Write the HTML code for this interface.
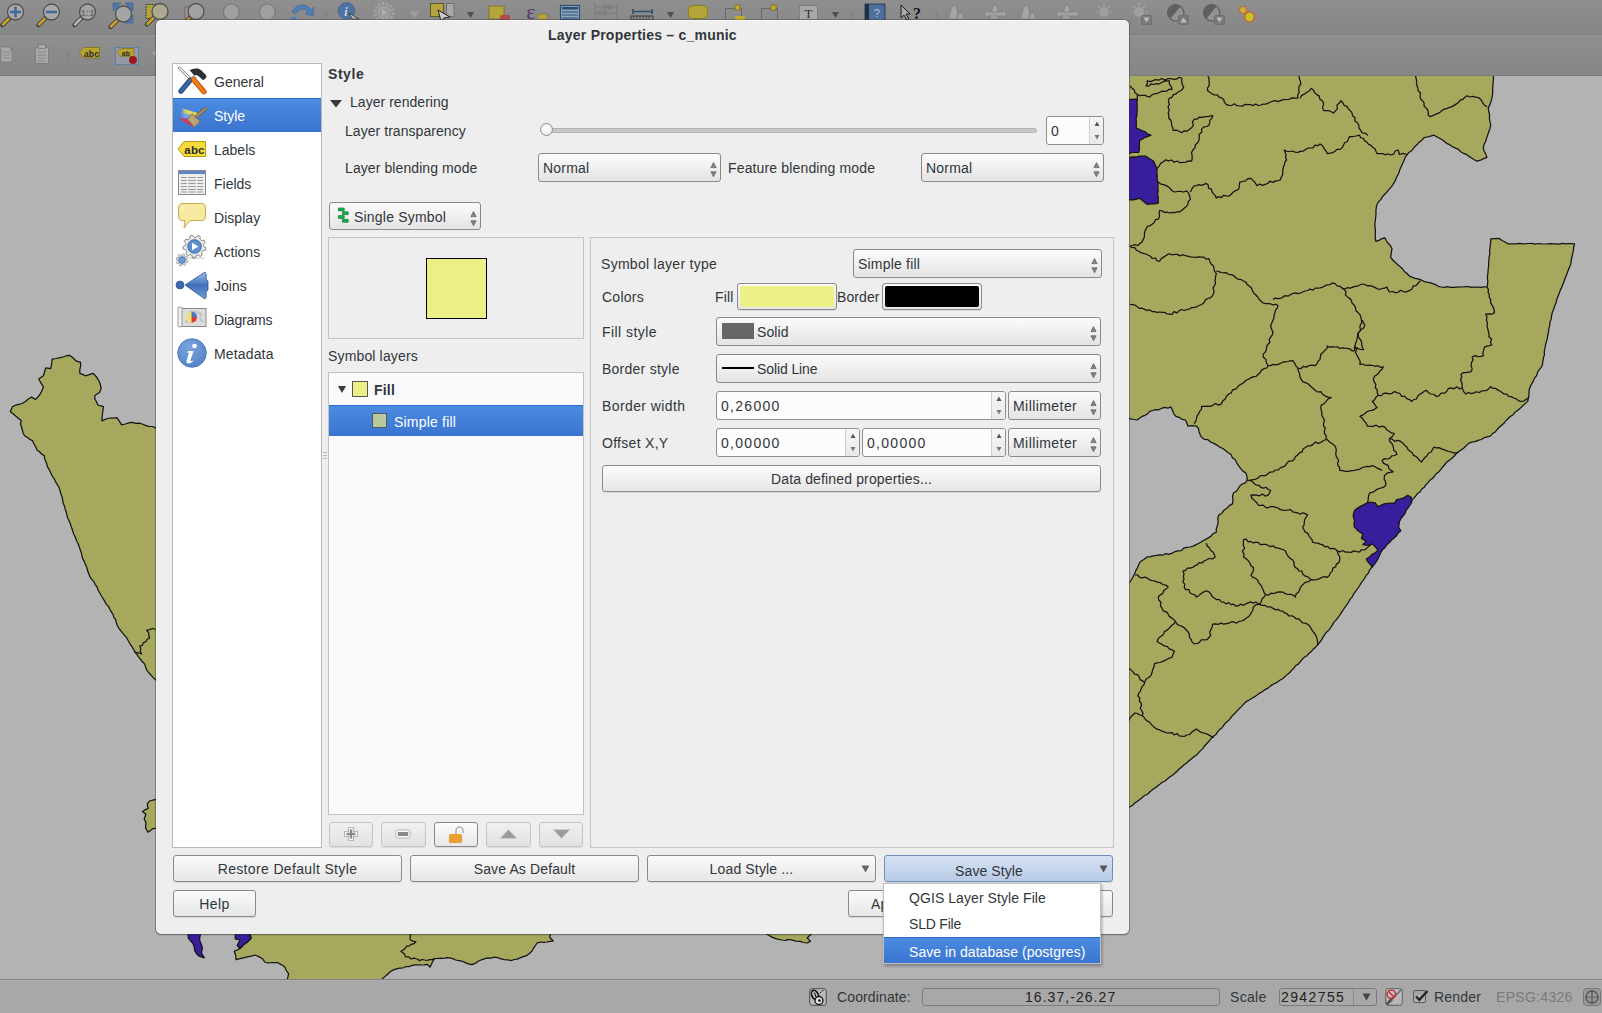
<!DOCTYPE html>
<html><head><meta charset="utf-8">
<style>
*{margin:0;padding:0;box-sizing:border-box}
html,body{width:1602px;height:1013px;overflow:hidden;background:#b3b3b3;font-family:"Liberation Sans",sans-serif;font-size:14px;color:#31363b;letter-spacing:0.15px}
.a{position:absolute}
.t{position:absolute;white-space:nowrap;line-height:16px}
#tb1{left:0;top:0;width:1602px;height:35px;background:linear-gradient(#8f8f8f,#868686);border-bottom:1px solid #7d7d7d}
#tb2{left:0;top:35px;width:1602px;height:41px;background:linear-gradient(#8f8f8f,#868686);border-top:1px solid #979797;border-bottom:1px solid #7b7b7b}
#map{left:0;top:76px;width:1602px;height:903px;background:#b3b3b3;overflow:hidden}
#sb{left:0;top:979px;width:1602px;height:34px;background:#a8a8a8;border-top:1px solid #828282;box-shadow:inset 0 1px 0 #afafaf}
#dlg{left:156px;top:20px;width:973px;height:914px;background:#eeeeee;border-radius:5px;box-shadow:0 0 0 1px rgba(60,60,60,.35),0 1px 2px rgba(0,0,0,.3);border-top:1px solid #f8f8f8}
.btn{position:absolute;border:1px solid #8a8a8a;padding-top:1px;border-radius:3px;background:linear-gradient(#fbfbfb,#e6e6e6);text-align:center;line-height:24px;box-shadow:0 1px 0 rgba(0,0,0,.08)}
.cmb{position:absolute;border:1px solid #8a8a8a;border-radius:3px;background:linear-gradient(#fbfbfb,#e4e4e4);line-height:26px;padding-left:5px}
.spin{position:absolute;border:1px solid #8f8f8f;border-radius:3px;background:#fcfcfc;line-height:26px;padding-left:5px}
.arr{position:absolute;right:6px;top:7px;width:7px;height:14px}
.frame{position:absolute;border:1px solid #c4c4c4}

.ud{position:absolute;width:7px;height:18px}
.sel{background:linear-gradient(#4b8ce0,#3a74d0);color:#fff;border-top:1px solid #2f6bcc}
.mi{position:absolute;left:883px;width:218px;height:27px}
</style></head><body>
<div id="tb1" class="a"></div>
<div id="tb2" class="a"></div>
<svg class="a" style="left:0;top:0" width="1602" height="76" viewBox="0 0 1602 76"><line x1="9.5" y1="18" x2="2.5" y2="25" stroke="#3a3a3a" stroke-width="4.4" stroke-linecap="round"/><line x1="8.5" y1="19" x2="3.0" y2="24.5" stroke="#c9a227" stroke-width="2.6" stroke-linecap="round"/><circle cx="15.5" cy="12" r="8" fill="#a9a9a9" stroke="#505050" stroke-width="1.3"/><path d="M15.5 6.5V17.5M10 12H21" stroke="#3f6a9c" stroke-width="2.6"/><line x1="45.5" y1="18" x2="38.5" y2="25" stroke="#3a3a3a" stroke-width="4.4" stroke-linecap="round"/><line x1="44.5" y1="19" x2="39.0" y2="24.5" stroke="#c9a227" stroke-width="2.6" stroke-linecap="round"/><circle cx="51.5" cy="12" r="8" fill="#a9a9a9" stroke="#505050" stroke-width="1.3"/><path d="M46 12H57" stroke="#3f6a9c" stroke-width="2.6"/><line x1="81.5" y1="18" x2="74.5" y2="25" stroke="#3a3a3a" stroke-width="4.4" stroke-linecap="round"/><line x1="80.5" y1="19" x2="75.0" y2="24.5" stroke="#b5b5b5" stroke-width="2.6" stroke-linecap="round"/><circle cx="87.5" cy="12" r="8" fill="#a3a3a3" stroke="#505050" stroke-width="1.3"/><text x="87.5" y="15.5" font-family="Liberation Sans" font-weight="bold" font-size="9.5" text-anchor="middle" fill="#6f6f6f">1:1</text><path d="M113 3h8l-3 3 3 3-3 3-3-3-2 2z M133 3h-8l3 3-3 3 3 3 3-3 2 2z M133 23h-8l3-3-3-3 3-3 3 3 2-2z" fill="#4f78a8" stroke="#3a5f8a" stroke-width="0.6"/><line x1="117.5" y1="20" x2="110.5" y2="27" stroke="#3a3a3a" stroke-width="4.4" stroke-linecap="round"/><line x1="116.5" y1="21" x2="111.0" y2="26.5" stroke="#c9a227" stroke-width="2.6" stroke-linecap="round"/><circle cx="123.5" cy="14" r="8" fill="#a5a5a5" stroke="#505050" stroke-width="1.3"/><rect x="146" y="4.5" width="10" height="14" fill="#b4a33a" stroke="#2a2a2a" stroke-width="1" stroke-dasharray="1.6 1.2"/><line x1="154" y1="17.5" x2="147" y2="24.5" stroke="#3a3a3a" stroke-width="4.4" stroke-linecap="round"/><line x1="153" y1="18.5" x2="147.5" y2="24.0" stroke="#c9a227" stroke-width="2.6" stroke-linecap="round"/><circle cx="160" cy="11.5" r="8" fill="#aba98f" stroke="#505050" stroke-width="1.3"/><rect x="185" y="7" width="4" height="12" fill="#a58fa6" stroke="#555" stroke-width="0.6"/><line x1="190" y1="17.5" x2="183" y2="24.5" stroke="#3a3a3a" stroke-width="4.4" stroke-linecap="round"/><line x1="189" y1="18.5" x2="183.5" y2="24.0" stroke="#c9a227" stroke-width="2.6" stroke-linecap="round"/><circle cx="196" cy="11.5" r="8" fill="#a2a2a2" stroke="#505050" stroke-width="1.3"/><circle cx="231.4" cy="12" r="8" fill="#9f9f9f" stroke="#7a7a7a" stroke-width="1.2"/><circle cx="267.4" cy="12" r="8" fill="#9f9f9f" stroke="#7a7a7a" stroke-width="1.2"/><path d="M292 12 Q296 4 304 5 Q309 6 311 10 L314 7 L313 16 L305 14 L308 12 Q306 9 302 9 Q297 10 296 14Z" fill="#4f7fb4" stroke="#3b6596" stroke-width="0.6"/><path d="M291 17 h6 l-1 3 h-5z" fill="#4f7fb4"/><path d="M324.5 12h3M324.5 15h3M324.5 18h3" stroke="#7a7a7a" stroke-width="1"/><circle cx="346.5" cy="11" r="8.3" fill="#4d74a2" stroke="#3d5f88" stroke-width="0.8"/><text x="346" y="16" font-family="Liberation Serif" font-style="italic" font-weight="bold" font-size="12" text-anchor="middle" fill="#cfd8e2">i</text><path d="M349 13 L359 19 L352 19Z" fill="#b9b9b9" stroke="#222" stroke-width="0.7"/><circle cx="384" cy="12.5" r="9" fill="none" stroke="#a3a3a3" stroke-width="3" stroke-dasharray="2.4 1.6"/><circle cx="384" cy="12.5" r="6" fill="#9a9a9a" stroke="#a6a6a6" stroke-width="1.2"/><path d="M382 9L387 12.5L382 16Z" fill="#b0b0b0"/><path d="M411 12h7l-3.5 6z" fill="#9c9c9c" stroke="#a7a7a7" stroke-width="0.6"/><rect x="430.5" y="3.5" width="13" height="13" fill="#b3a43c" stroke="#4f4a1a" stroke-width="0.8"/><rect x="446.5" y="3.5" width="7.5" height="13" fill="#a7a7a7" stroke="#666" stroke-width="0.8"/><path d="M438 10L450 17L444 18L441 21Z" fill="#c9c9c9" stroke="#111" stroke-width="0.9"/><path d="M467 12h7l-3.5 6z" fill="#4f4f4f"/><rect x="489" y="6" width="15" height="13" fill="#b3a43c" stroke="#5a5018" stroke-width="0.8" stroke-dasharray="1.5 1"/><rect x="500" y="15" width="10" height="6" rx="2" fill="#b24a4a"/><text x="531" y="19" font-family="Liberation Serif" font-size="22" text-anchor="middle" fill="#5a2f6e">ε</text><rect x="538" y="14" width="9" height="6" fill="#b3a43c" stroke="#5a5018" stroke-width="0.6" stroke-dasharray="1.2 0.8"/><rect x="560.5" y="5.5" width="19" height="14" fill="#8fa6c0" stroke="#2d4d70" stroke-width="1.2"/><path d="M562 9h16M562 12h16M562 15h16M562 18h16" stroke="#2d4d70" stroke-width="1"/><rect x="562" y="7" width="16" height="2" fill="#2d4d70"/><path d="M595 3V20M617 3V20M595 7H617M595 13H617" stroke="#7b7b7b" stroke-width="1"/><circle cx="605" cy="7" r="2" fill="none" stroke="#7b7b7b"/><circle cx="610" cy="7" r="2" fill="none" stroke="#7b7b7b"/><circle cx="600" cy="13" r="2" fill="none" stroke="#7b7b7b"/><circle cx="605" cy="13" r="2" fill="none" stroke="#7b7b7b"/><path d="M633 9V14M652 9V14M633 11.5H652" stroke="#2d4d70" stroke-width="1.6"/><rect x="631" y="16" width="22" height="4" fill="none" stroke="#3d3d3d" stroke-width="1"/><path d="M634 16v3M637 16v3M640 16v3M643 16v3M646 16v3M649 16v3" stroke="#3d3d3d" stroke-width="0.8"/><path d="M667 12h7l-3.5 6z" fill="#4f4f4f"/><rect x="688.5" y="5.5" width="19" height="13" rx="4" fill="#b3a43c" stroke="#8c7c20" stroke-width="1"/><rect x="725.5" y="8.5" width="16" height="12" fill="none" stroke="#333" stroke-width="0.8" stroke-dasharray="1 1"/><path d="M735 5h5v5h-5z" fill="#c4ac2a" stroke="#6a5a10" stroke-width="0.6"/><rect x="735" y="16" width="10" height="5" rx="2" fill="#c4ac2a"/><rect x="761.5" y="8.5" width="16" height="12" fill="none" stroke="#333" stroke-width="0.8" stroke-dasharray="1 1"/><path d="M771 5h5v5h-5z" fill="#c4ac2a" stroke="#6a5a10" stroke-width="0.6"/><rect x="799.5" y="5.5" width="18" height="14" fill="#a8a8a8" stroke="#7a7a7a" stroke-width="0.8"/><text x="808.5" y="18" font-family="Liberation Serif" font-size="13" text-anchor="middle" fill="#2e2e2e">T</text><path d="M832 12h7l-3.5 6z" fill="#4f4f4f"/><path d="M850.5 12h3M850.5 15h3M850.5 18h3" stroke="#7a7a7a" stroke-width="1"/><rect x="865" y="4" width="20" height="17" fill="#4d6f9a" stroke="#1f2f44" stroke-width="0.8"/><rect x="865" y="4" width="4" height="17" fill="#1f2f44"/><text x="877" y="17" font-family="Liberation Sans" font-size="11" text-anchor="middle" fill="#b8c8dc">?</text><path d="M901 5L901 18L904 15L907 20L909 19L906 14L910 14Z" fill="#a9a9a9" stroke="#111" stroke-width="0.9"/><text x="917" y="19" font-family="Liberation Serif" font-weight="bold" font-size="16" text-anchor="middle" fill="#111">?</text><path d="M935.5 12h3M935.5 15h3M935.5 18h3" stroke="#7a7a7a" stroke-width="1"/><path d="M949 19 Q951 4 955 5 Q958 8 957 19 Z M957 19 Q960 8 963 16 V19Z" fill="#a5a5a5" stroke="#7d7d7d" stroke-width="0.7"/><path d="M1021 19 Q1023 4 1027 5 Q1030 8 1029 19 Z M1029 19 Q1032 8 1035 16 V19Z" fill="#a5a5a5" stroke="#7d7d7d" stroke-width="0.7"/><path d="M990 19 Q992 4 996 5 Q999 8 998 19 Z" fill="#a5a5a5" stroke="#7d7d7d" stroke-width="0.7"/><path d="M984 14 L988 10 V12 H1003 V10 L1007 14 L1003 18 V16 H988 V18 Z" fill="#a2a2a2" stroke="#7d7d7d" stroke-width="0.7"/><path d="M1062 19 Q1064 4 1068 5 Q1071 8 1070 19 Z" fill="#a5a5a5" stroke="#7d7d7d" stroke-width="0.7"/><path d="M1056 14 L1060 10 V12 H1075 V10 L1079 14 L1075 18 V16 H1060 V18 Z" fill="#a2a2a2" stroke="#7d7d7d" stroke-width="0.7"/><circle cx="1104" cy="12" r="5" fill="#9f9f9f"/><path d="M1104 3v3M1095 12h3M1113 12h-3M1098 6l2 2M1110 6l-2 2" stroke="#a5a5a5" stroke-width="1.2"/><rect x="1106" y="16" width="9" height="7" rx="1" fill="#8a8a8a"/><circle cx="1139" cy="12" r="5" fill="#9f9f9f"/><path d="M1139 3v3M1130 12h3M1148 12h-3M1133 6l2 2M1145 6l-2 2" stroke="#a5a5a5" stroke-width="1.2"/><rect x="1141.5" y="15.5" width="10" height="9" rx="1.5" fill="#7a7a7a" stroke="#6f6f6f"/><path d="M1143.5 17.5h6l-3 5z" fill="#bdbdbd"/><circle cx="1176" cy="13" r="8" fill="#929292" stroke="#5a5a5a" stroke-width="1.2"/><path d="M1170 19 L1181 6 A8 8 0 0 0 1170 19Z" fill="#5f5f5f"/><rect x="1178.5" y="15.5" width="10" height="9" rx="1.5" fill="#7a7a7a" stroke="#6f6f6f"/><path d="M1180.5 22.5h6l-3 -5z" fill="#bdbdbd"/><circle cx="1212" cy="13" r="8" fill="#929292" stroke="#5a5a5a" stroke-width="1.2"/><path d="M1206 19 L1217 6 A8 8 0 0 0 1206 19Z" fill="#5f5f5f"/><rect x="1214.5" y="15.5" width="10" height="9" rx="1.5" fill="#7a7a7a" stroke="#6f6f6f"/><path d="M1216.5 17.5h6l-3 5z" fill="#bdbdbd"/><circle cx="1243" cy="10" r="3.5" fill="#c9b436" stroke="#c06a3a" stroke-width="1.2"/><circle cx="1249.5" cy="17" r="5" fill="#c9c02a" stroke="#c06a3a" stroke-width="1.6"/><path d="M1 47h8l3 3v12H1z" fill="#a9a9a9" stroke="#7c7c7c" stroke-width="0.8"/><path d="M3 52h7M3 55h7M3 58h7" stroke="#7f7f7f" stroke-width="0.8"/><path d="M9 50h3v-3" fill="none" stroke="#7c7c7c" stroke-width="0.8"/><rect x="35.5" y="47.5" width="13" height="16" fill="#a9a9a9" stroke="#7c7c7c" stroke-width="0.9"/><rect x="38.5" y="44.5" width="7" height="4" fill="#a9a9a9" stroke="#7c7c7c" stroke-width="0.8"/><path d="M38 52h8M38 55h8M38 58h8M38 61h8" stroke="#7f7f7f" stroke-width="0.8"/><path d="M66.5 52h3M66.5 55h3M66.5 58h3" stroke="#7a7a7a" stroke-width="1"/><path d="M79 52.5L84 47.5H99.5V58H84Z" fill="#b9a42e" stroke="#80701a" stroke-width="0.8"/><text x="91.5" y="56.5" font-family="Liberation Sans" font-weight="bold" font-size="8.5" text-anchor="middle" fill="#2a2a2a">abc</text><rect x="115.5" y="47.5" width="23" height="17" fill="#939aa5" stroke="#5d7fa8" stroke-width="1"/><path d="M117 52.5L121 48.5H134V56.5H121Z" fill="#b9a42e" stroke="#80701a" stroke-width="0.7"/><text x="126" y="55.5" font-family="Liberation Sans" font-weight="bold" font-size="7" text-anchor="middle" fill="#2a2a2a">ab</text><circle cx="133" cy="60" r="4" fill="#9b1a1a"/><path d="M156 49.5v7l-4-3.5z" fill="#a3a3a3"/></svg>
<div id="map" class="a"></div>
<svg class="a" style="left:0;top:76px" width="1602" height="903" viewBox="0 0 1602 903">
<polygon points="1120.0,-6.0 1123.0,-6.2 1126.0,-6.3 1129.0,-5.9 1132.0,-6.4 1135.1,-6.0 1138.1,-6.1 1141.1,-6.4 1144.1,-6.0 1147.1,-6.4 1150.1,-6.1 1153.1,-6.4 1156.1,-6.4 1159.2,-6.1 1162.2,-5.7 1165.2,-6.3 1168.2,-6.2 1171.2,-5.9 1174.2,-5.6 1177.2,-5.9 1180.2,-6.1 1183.3,-5.6 1186.3,-6.4 1189.3,-5.7 1192.3,-6.2 1195.3,-6.3 1198.3,-6.3 1201.3,-6.2 1204.3,-5.7 1207.4,-6.3 1210.4,-5.9 1213.4,-5.9 1216.4,-6.1 1219.4,-6.0 1222.4,-6.4 1225.4,-6.4 1228.4,-6.3 1231.4,-5.8 1234.5,-6.1 1237.5,-6.2 1240.5,-5.9 1243.5,-6.0 1246.5,-6.2 1249.5,-5.7 1252.5,-5.8 1255.5,-6.2 1258.6,-5.9 1261.6,-6.0 1264.6,-5.7 1267.6,-5.8 1270.6,-6.2 1273.6,-5.6 1276.6,-6.3 1279.6,-6.1 1282.7,-5.8 1285.7,-6.3 1288.7,-6.0 1291.7,-6.4 1294.7,-5.8 1297.7,-5.8 1300.7,-5.9 1303.7,-5.7 1306.8,-6.2 1309.8,-5.8 1312.8,-5.9 1315.8,-5.9 1318.8,-6.0 1321.8,-5.7 1324.8,-5.6 1327.8,-6.0 1330.8,-5.9 1333.9,-6.4 1336.9,-5.8 1339.9,-5.9 1342.9,-5.6 1345.9,-5.7 1348.9,-6.2 1351.9,-6.1 1354.9,-5.8 1358.0,-6.4 1361.0,-6.0 1364.0,-6.3 1367.0,-6.3 1370.0,-6.4 1373.0,-5.8 1376.0,-6.3 1379.0,-6.2 1382.1,-6.1 1385.1,-5.7 1388.1,-6.4 1391.1,-6.0 1394.1,-6.0 1397.1,-5.7 1400.1,-5.7 1403.1,-5.7 1406.1,-6.2 1409.2,-6.1 1412.2,-6.1 1415.2,-5.7 1418.2,-5.6 1421.2,-6.3 1424.2,-6.3 1427.2,-6.2 1430.2,-6.2 1433.3,-6.0 1436.3,-5.9 1439.3,-6.2 1442.3,-6.4 1445.3,-6.1 1448.3,-6.1 1451.3,-5.9 1454.3,-5.6 1457.4,-5.8 1460.4,-6.0 1463.4,-5.9 1466.4,-5.8 1469.4,-6.4 1472.4,-5.6 1475.4,-5.7 1478.4,-5.7 1481.5,-5.7 1484.5,-6.1 1487.5,-6.1 1490.5,-6.4 1493.5,-6.0 1493.2,-2.9 1493.5,0.3 1493.4,3.4 1493.1,6.5 1492.9,9.7 1492.6,12.8 1492.7,16.0 1492.5,19.1 1491.9,22.2 1491.0,25.6 1489.8,28.9 1488.2,32.1 1488.8,35.5 1489.6,39.0 1489.4,42.5 1490.1,46.0 1490.7,49.4 1489.9,52.7 1488.8,55.8 1487.7,59.0 1486.6,62.1 1485.7,65.4 1484.1,68.3 1483.3,71.6 1484.1,75.0 1485.8,78.1 1487.0,81.4 1483.7,82.6 1480.5,84.2 1477.1,85.1 1474.2,83.8 1471.6,82.0 1468.9,80.4 1466.5,78.4 1463.4,77.3 1460.7,75.8 1458.4,73.4 1455.5,72.1 1452.6,70.8 1450.1,68.9 1447.2,67.7 1444.7,65.7 1442.2,63.7 1439.5,62.2 1436.7,60.7 1433.9,59.2 1430.7,60.2 1427.3,61.0 1424.0,61.7 1422.1,64.1 1419.5,65.9 1417.5,68.2 1415.2,70.2 1413.4,72.6 1411.3,74.9 1408.8,76.6 1406.8,79.0 1405.0,81.8 1403.8,84.9 1402.4,87.9 1401.0,90.9 1399.7,94.0 1398.8,97.2 1397.1,100.1 1395.9,103.1 1394.4,106.1 1392.8,108.8 1390.9,111.3 1388.8,113.6 1386.9,116.1 1384.7,118.3 1382.5,120.6 1381.0,123.4 1378.7,125.6 1377.1,128.3 1376.3,131.5 1375.9,134.9 1376.0,138.2 1375.7,141.5 1375.3,144.8 1374.7,148.1 1375.2,151.5 1375.4,155.0 1375.3,158.5 1375.3,162.0 1375.9,165.4 1378.9,164.4 1381.7,162.8 1384.6,161.6 1386.3,164.5 1388.1,167.3 1390.5,169.8 1392.0,172.8 1391.2,177.1 1390.7,181.4 1392.8,184.0 1395.1,186.2 1397.5,188.5 1400.0,190.6 1402.5,192.8 1404.4,195.5 1407.0,197.5 1409.2,199.9 1412.0,201.2 1414.9,202.3 1418.0,202.8 1420.9,203.9 1423.7,205.3 1426.6,206.1 1429.7,206.7 1432.7,207.7 1435.6,208.7 1438.3,210.3 1441.3,211.0 1444.3,211.3 1447.4,210.7 1450.4,211.3 1453.5,211.4 1456.5,211.1 1459.6,210.9 1462.6,211.0 1465.7,210.7 1468.7,210.6 1471.8,211.4 1474.8,211.1 1477.9,211.0 1480.9,211.4 1484.0,210.9 1487.0,211.0 1487.6,208.0 1487.8,205.0 1487.4,202.0 1487.7,199.0 1488.0,196.0 1488.2,192.9 1488.7,190.0 1488.6,186.9 1489.0,183.9 1489.0,180.9 1489.9,178.0 1489.6,174.9 1490.0,171.9 1490.3,168.9 1490.8,165.9 1490.7,162.9 1495.0,162.6 1499.3,162.4 1502.0,164.5 1505.1,166.0 1508.0,167.8 1511.7,167.8 1515.4,167.8 1519.1,167.4 1522.8,167.8 1525.8,167.7 1528.9,167.5 1531.9,167.4 1535.0,168.1 1538.0,167.5 1541.1,167.8 1544.1,168.0 1547.2,167.9 1550.2,167.6 1553.3,167.8 1556.3,167.8 1559.4,168.1 1562.4,167.4 1565.5,167.9 1568.5,167.6 1571.6,167.6 1574.6,167.8 1573.7,171.1 1573.4,174.4 1572.7,177.7 1571.9,181.0 1571.2,184.2 1570.9,187.6 1569.8,190.6 1568.5,193.5 1567.4,196.6 1566.3,199.6 1565.0,202.5 1564.0,205.6 1562.8,208.5 1561.7,211.5 1560.2,214.4 1559.2,217.5 1557.9,220.4 1556.7,223.4 1556.2,226.6 1554.8,229.5 1553.8,232.8 1552.5,236.0 1551.6,239.3 1551.3,242.8 1550.0,246.0 1549.7,249.4 1548.8,252.7 1548.5,256.2 1547.7,259.5 1547.2,262.9 1546.2,266.2 1545.5,269.3 1544.9,272.5 1544.3,275.7 1544.4,278.9 1543.4,282.0 1542.9,285.2 1542.5,288.4 1541.2,291.3 1539.1,293.8 1537.5,296.5 1536.6,299.6 1534.5,302.1 1533.4,305.1 1531.7,307.8 1530.2,310.6 1529.3,313.5 1528.9,316.5 1529.0,319.5 1528.3,322.5 1527.7,325.4 1525.2,327.6 1522.8,329.8 1520.5,332.1 1517.9,334.2 1515.2,336.1 1513.1,338.7 1510.3,340.5 1507.9,342.7 1505.8,344.9 1503.9,347.3 1501.6,349.3 1499.2,351.3 1497.1,353.5 1495.3,356.0 1492.5,357.5 1490.7,360.0 1487.4,360.8 1484.2,361.7 1481.3,363.5 1478.1,364.4 1475.0,365.7 1471.6,366.1 1468.5,367.4 1466.2,369.7 1463.8,372.0 1461.1,373.9 1458.4,375.8 1455.9,378.0 1453.8,380.5 1451.4,382.8 1448.7,384.7 1446.4,386.6 1444.5,389.0 1442.4,391.2 1440.7,393.7 1438.7,395.9 1436.2,397.8 1434.4,400.1 1432.5,402.5 1429.9,404.2 1428.1,406.6 1425.9,408.7 1424.3,411.3 1421.7,413.0 1420.2,415.7 1417.6,417.4 1415.8,419.8 1413.9,422.1 1411.7,424.2 1409.9,426.6 1407.9,428.9 1406.6,431.7 1404.9,434.2 1402.9,436.5 1401.3,439.1 1399.4,441.4 1398.3,444.2 1396.8,446.8 1395.4,449.5 1393.8,452.1 1392.3,454.6 1390.8,457.3 1389.0,459.7 1387.9,462.5 1386.3,465.1 1385.1,467.9 1383.5,470.4 1382.3,473.2 1380.7,475.7 1379.4,478.5 1377.4,480.8 1376.1,483.5 1374.9,486.3 1373.3,488.8 1371.8,491.4 1369.7,493.8 1368.6,496.9 1366.3,499.2 1364.8,502.0 1363.0,504.6 1361.0,507.1 1359.5,510.0 1357.7,512.5 1355.8,515.1 1353.8,517.6 1352.5,520.6 1350.4,522.9 1348.7,525.7 1347.1,528.4 1345.2,530.9 1343.5,533.5 1341.7,536.1 1340.0,538.8 1338.1,541.3 1336.3,543.9 1334.0,546.1 1332.5,548.9 1330.7,551.5 1328.9,554.1 1326.5,556.2 1324.6,558.7 1322.9,561.4 1321.4,564.1 1319.5,566.7 1317.5,569.1 1315.5,571.3 1313.2,573.3 1311.2,575.6 1308.9,577.5 1306.9,579.7 1304.3,581.3 1302.1,583.4 1300.2,585.8 1298.3,588.1 1295.6,589.7 1293.9,592.2 1291.7,594.2 1289.8,596.6 1287.4,598.4 1285.2,600.4 1283.0,602.5 1279.9,604.3 1276.9,606.4 1273.7,608.0 1270.6,609.9 1268.1,612.1 1265.2,613.6 1262.6,615.5 1259.7,617.1 1257.1,619.1 1254.4,620.9 1251.5,622.5 1248.8,624.3 1245.9,625.9 1243.6,628.2 1241.4,630.6 1239.1,632.8 1236.9,635.2 1234.7,637.5 1232.3,639.8 1230.4,642.4 1228.3,644.8 1225.6,646.8 1223.7,649.4 1221.8,651.9 1219.4,653.8 1217.4,656.1 1215.7,658.8 1213.1,660.6 1210.9,662.8 1209.0,665.3 1206.9,667.5 1204.7,669.7 1203.1,672.4 1200.8,674.4 1198.7,676.7 1196.6,679.0 1193.9,680.8 1191.5,682.8 1189.0,684.8 1186.7,687.0 1184.0,688.8 1181.7,691.0 1179.2,693.0 1177.0,695.3 1174.6,697.5 1172.1,699.4 1169.4,701.2 1167.0,703.2 1164.7,705.2 1161.8,706.5 1159.5,708.6 1157.0,710.4 1154.6,712.2 1152.1,714.0 1149.7,716.0 1147.5,718.2 1144.6,719.5 1142.2,721.4 1139.8,723.4 1137.4,725.2 1134.8,727.0 1132.7,729.3 1130.0,730.8 1126.6,732.3 1123.4,734.5 1120.0,736.0" fill="#a6a85e" stroke="#141414" stroke-width="1.25" stroke-linejoin="round"/>
<polygon points="10.3,335.4 12.6,330.6 15.6,329.2 18.9,328.3 22.1,327.5 25.4,325.5 28.3,323.0 31.6,321.1 35.5,323.5 37.5,321.3 39.6,319.0 41.1,316.4 43.4,310.9 41.8,308.3 40.2,305.7 38.7,303.0 43.4,299.8 44.6,295.8 45.8,291.9 50.6,292.7 51.3,289.6 51.8,286.4 52.1,283.2 56.1,282.5 60.0,281.6 63.2,281.0 66.2,279.7 69.5,279.3 72.9,281.8 75.8,284.8 80.6,286.4 80.6,290.1 79.8,293.7 79.8,297.4 82.6,298.4 85.3,299.8 89.3,298.7 93.2,297.4 96.3,300.7 98.7,304.5 100.3,308.3 101.1,312.4 99.5,316.4 94.8,319.6 94.8,322.7 96.5,325.8 97.9,329.0 103.5,330.6 102.9,334.1 102.5,337.7 102.1,341.2 101.9,344.8 107.4,342.5 110.6,342.0 113.7,342.0 116.9,341.7 119.3,345.2 121.6,348.8 125.3,348.0 128.9,346.9 132.7,346.4 135.8,347.3 139.1,347.2 142.2,348.0 145.4,349.4 148.8,350.3 152.4,350.5 155.6,351.9 158.7,352.6 161.8,353.6 165.0,354.0 164.6,357.0 165.0,360.0 165.2,363.1 165.3,366.1 164.6,369.1 165.3,372.1 164.9,375.2 165.3,378.2 165.0,381.2 164.6,384.2 165.3,387.3 164.7,390.3 165.0,393.3 164.7,396.3 164.8,399.3 165.2,402.4 164.6,405.4 165.0,408.4 165.4,411.4 165.4,414.5 165.0,417.5 165.0,420.5 165.2,423.5 165.3,426.6 165.1,429.6 165.2,432.6 164.7,435.6 165.4,438.7 164.8,441.7 164.7,444.7 165.3,447.7 164.6,450.7 164.8,453.8 164.6,456.8 165.2,459.8 165.1,462.8 165.1,465.9 164.6,468.9 164.9,471.9 165.1,474.9 165.1,478.0 165.2,481.0 165.4,484.0 165.4,487.0 164.7,490.0 165.2,493.1 164.6,496.1 165.2,499.1 165.2,502.1 165.0,505.2 165.3,508.2 165.1,511.2 164.6,514.2 164.7,517.3 164.7,520.3 164.9,523.3 164.6,526.3 164.6,529.3 165.0,532.4 164.8,535.4 165.4,538.4 164.8,541.4 165.0,544.5 164.8,547.5 164.9,550.5 165.2,553.5 165.4,556.6 164.6,559.6 165.3,562.6 165.0,565.6 165.1,568.7 165.2,571.7 164.8,574.7 164.6,577.7 165.2,580.7 164.9,583.8 165.2,586.8 164.9,589.8 165.1,592.8 165.3,595.9 165.3,598.9 165.3,601.9 164.6,604.9 165.0,608.0 165.3,611.0 165.0,614.0 162.9,611.2 160.6,608.5 157.8,606.3 155.5,603.7 153.0,601.4 150.8,598.9 148.6,596.5 146.6,593.8 145.5,590.9 144.6,587.9 142.4,585.8 140.5,583.3 138.6,580.9 136.8,578.3 134.8,576.0 133.5,573.1 131.8,570.4 130.0,567.8 128.4,565.0 126.9,562.2 124.9,559.7 122.9,557.3 120.9,554.9 119.0,552.3 117.4,549.7 116.4,546.9 115.8,543.9 113.9,541.4 113.0,538.5 111.4,535.9 109.8,533.2 108.4,530.4 106.2,528.1 104.7,525.4 103.2,522.7 101.4,520.0 99.8,517.0 98.2,514.2 97.0,511.1 95.2,508.3 93.6,505.4 91.3,502.9 89.7,500.1 88.4,497.0 87.5,494.0 86.6,491.0 85.2,488.1 84.2,485.1 82.6,482.4 81.9,479.3 81.2,476.2 80.1,473.2 79.0,470.3 78.0,467.3 76.4,464.5 75.5,461.5 74.0,458.8 73.0,456.0 72.1,453.0 71.1,450.2 70.2,447.3 68.9,444.5 67.6,441.8 66.9,438.8 66.2,435.8 65.1,432.9 64.4,429.9 63.1,427.1 62.7,424.0 62.0,420.7 60.7,417.6 60.0,414.3 59.0,411.4 57.4,408.7 55.7,406.1 54.5,403.3 52.4,400.3 50.8,397.1 49.3,393.7 47.4,390.6 46.5,386.9 44.9,383.4 44.2,379.6 41.6,378.0 39.5,375.8 37.1,374.0 35.6,370.8 33.9,367.8 32.4,364.6 29.6,363.2 27.2,361.3 24.5,359.8 23.1,357.0 22.3,354.0 21.5,351.0 20.5,348.0 21.3,344.8" fill="#a6a85e" stroke="#141414" stroke-width="1.25" stroke-linejoin="round"/>
<polygon points="154.9,723.7 149.4,725.0 147.3,727.8 148.0,732.7 145.1,733.7 142.5,735.4 145.9,738.2 144.2,743.0 145.9,746.5 145.6,752.0 148.0,756.2 152.8,752.7 155.9,752.4 158.9,752.2 161.9,751.4 165.0,751.0 164.8,747.9 164.8,744.8 165.4,741.7 165.2,738.6 164.8,735.4 164.6,732.3 165.0,729.2 165.2,726.1 165.0,723.0" fill="#a6a85e" stroke="#141414" stroke-width="1.25" stroke-linejoin="round"/>
<polygon points="251.1,862.1 248.9,864.2 246.8,866.4 244.3,868.2 241.9,870.1 239.9,872.4 237.2,874.0 234.3,875.2 235.6,879.3 236.1,883.6 239.8,882.6 243.6,881.8 247.3,880.8 251.2,880.1 254.9,879.0 258.8,880.6 262.4,882.7 265.2,886.5 268.2,886.8 271.2,886.7 274.3,886.5 277.3,886.5 281.2,888.6 284.8,891.1 286.3,894.6 288.6,897.7 287.8,901.5 286.5,905.2 285.8,909.0 288.8,908.8 291.8,908.7 294.8,909.2 297.9,908.8 300.9,909.4 303.9,909.0 306.9,908.7 309.9,908.8 312.9,908.9 315.9,909.1 318.9,909.4 321.9,908.7 325.0,908.9 328.0,908.7 331.0,909.4 334.0,908.7 337.0,908.6 340.0,908.6 343.0,908.9 346.1,909.4 349.1,909.3 352.1,909.2 355.1,909.4 358.1,909.4 361.1,908.8 364.1,908.7 367.1,909.4 370.1,909.2 373.2,908.6 376.2,909.1 379.2,908.9 382.2,909.0 382.1,906.0 382.2,903.0 384.9,900.6 387.6,898.2 390.3,895.8 393.4,893.9 396.5,892.9 399.6,892.2 402.9,892.0 405.9,890.5 409.2,890.5 412.2,889.3 415.2,888.8 418.2,888.8 421.2,889.0 424.2,888.8 427.2,888.3 430.0,891.1 431.5,888.3 432.7,885.3 434.6,882.7 437.6,882.5 440.6,882.2 443.6,882.5 446.6,881.7 449.6,881.8 452.7,882.6 455.6,884.0 458.7,884.6 462.1,885.2 465.3,886.6 468.4,887.9 471.8,888.7 475.2,887.4 478.2,885.3 481.5,883.8 484.9,882.7 488.0,881.8 491.2,882.1 494.3,881.2 497.7,881.7 501.0,882.8 504.4,883.6 507.8,883.8 511.2,884.6 514.1,883.5 517.3,883.1 520.2,881.9 523.1,880.6 526.1,879.9 529.1,877.7 531.8,875.2 533.5,872.3 535.4,869.5 537.4,866.8 540.5,866.0 543.8,866.3 547.0,866.0 550.1,865.4 553.3,864.9 549.6,861.2 550.5,858.0 550.8,854.5 549.8,851.0 549.9,847.5 550.0,844.0 547.0,844.0 544.0,843.6 541.0,843.6 538.0,844.1 535.0,844.2 532.0,844.1 529.0,844.0 526.0,843.6 523.0,844.3 520.0,843.7 517.0,843.8 514.0,843.7 511.0,843.8 508.0,843.9 505.0,844.2 502.0,844.2 499.0,844.1 496.0,843.7 493.0,844.4 490.0,844.3 487.0,843.8 484.0,844.2 481.0,844.4 478.0,844.4 475.0,844.0 472.0,844.2 469.0,843.6 466.0,843.7 463.0,843.6 460.0,844.2 457.0,844.4 454.0,844.4 451.0,844.0 448.0,843.8 445.0,844.0 442.0,844.2 439.0,844.1 436.0,843.9 433.0,843.8 430.0,843.8 427.0,843.7 424.0,843.9 421.0,844.3 418.0,843.7 415.0,844.2 412.0,843.9 409.0,844.1 406.0,843.8 403.0,844.3 400.0,844.2 397.0,844.2 394.0,844.3 391.0,843.7 388.0,843.9 385.0,844.2 382.0,844.1 379.0,843.6 376.0,844.0 373.0,844.2 370.0,843.7 367.0,843.9 364.0,843.6 361.0,844.4 358.0,844.0 355.0,843.7 352.0,843.7 349.0,843.6 346.0,844.4 343.0,844.2 340.0,844.3 337.0,844.3 334.0,843.6 331.0,843.9 328.0,843.6 325.0,844.1 322.0,843.7 319.0,844.0 316.0,844.2 313.0,843.8 310.0,843.6 307.0,844.4 304.0,843.9 301.0,843.9 298.0,844.3 295.0,844.1 292.0,844.3 289.0,844.3 286.0,844.2 283.0,843.9 280.0,843.9 277.0,844.3 274.0,844.4 271.0,844.2 268.0,843.8 265.0,844.3 262.0,844.2 259.0,844.3 256.0,843.7 253.0,844.0 250.0,844.4 247.0,844.0" fill="#a6a85e" stroke="#141414" stroke-width="1.25" stroke-linejoin="round"/>
<polygon points="760.0,849.0 762.3,851.7 764.1,854.7 766.1,857.6 769.2,859.5 772.4,861.4 777.4,863.2 781.7,864.0 786.1,864.5 787.4,863.5 791.8,863.9 796.1,865.1 799.9,865.4 803.5,866.5 807.3,867.0 810.5,865.1 807.3,862.0 809.4,859.7 811.7,857.6 812.6,854.7 813.7,851.8 815.0,849.0" fill="#a6a85e" stroke="#141414" stroke-width="1.25" stroke-linejoin="round"/>
<polygon points="1120.0,342.0 1123.3,343.0 1126.7,342.2 1130.0,342.7 1133.6,343.5 1137.3,344.0 1139.6,342.1 1142.2,340.4 1145.1,339.3 1147.7,337.7 1149.7,335.3 1152.7,334.5 1155.6,333.6 1158.8,333.8 1161.6,332.3 1164.5,331.4 1167.8,332.2 1170.7,330.9 1172.4,333.9 1173.5,337.3 1175.6,340.2 1179.0,341.3 1182.0,343.3 1185.5,344.0 1186.8,347.0 1187.9,350.1 1192.2,349.6 1196.6,350.1 1198.5,352.6 1199.0,355.7 1200.1,358.5 1201.5,361.2 1204.3,363.3 1207.9,363.7 1210.6,366.0 1213.8,367.4 1216.8,369.1 1219.6,371.1 1222.8,372.5 1225.5,374.5 1228.2,376.7 1231.1,378.5 1232.4,381.7 1235.3,383.7 1236.7,386.8 1238.5,389.6 1240.6,392.4 1242.9,395.1 1245.9,397.0 1247.0,400.6 1247.2,404.4 1245.3,406.9 1242.2,408.0 1239.9,410.0 1238.2,412.7 1236.3,415.3 1233.6,416.8 1232.5,420.4 1233.0,424.2 1232.4,427.9 1229.3,429.6 1226.8,432.2 1223.9,434.2 1221.9,437.2 1218.8,439.0 1217.8,442.4 1218.2,445.9 1217.5,449.3 1216.3,452.7 1216.3,456.2 1213.1,457.6 1210.8,460.3 1207.9,462.1 1204.9,463.7 1201.9,465.4 1199.0,467.3 1196.1,468.6 1193.2,470.1 1190.1,471.0 1186.8,471.4 1183.7,472.2 1181.2,474.6 1177.9,474.9 1174.8,475.7 1171.9,477.2 1168.9,478.4 1165.6,477.6 1162.7,479.2 1159.5,478.9 1156.5,479.4 1153.3,479.8 1150.3,480.7 1147.2,480.9 1143.7,483.6 1140.0,486.0 1138.6,488.7 1137.6,491.5 1136.0,494.1 1135.0,497.0 1133.4,500.0 1131.8,503.0 1130.0,506.0 1126.7,506.8 1123.3,505.8 1120.0,506.0" fill="#b3b3b3" stroke="#141414" stroke-width="1.25" stroke-linejoin="round"/>
<polyline points="1129.9,9.9 1131.8,12.0 1134.1,13.8 1135.0,16.7 1137.3,18.5 1137.3,23.4" fill="none" stroke="#141414" stroke-width="1.25" stroke-linejoin="round"/>
<polyline points="1137.3,18.5 1139.7,19.6 1142.3,19.4 1144.9,19.3 1147.2,20.4 1149.7,21.0 1151.8,19.0 1154.3,17.8 1157.1,17.3 1159.5,16.5 1161.8,15.2 1164.5,15.3 1167.0,14.9 1169.2,13.2 1171.9,13.6 1171.4,10.6 1169.3,8.1 1169.4,4.9 1166.7,4.9 1164.1,5.4 1161.6,6.5 1159.2,8.1 1156.4,7.7 1153.9,8.5 1151.0,7.8 1148.8,10.2 1146.0,9.9 1147.4,7.6 1147.2,4.9 1150.2,5.6 1153.0,4.6 1155.8,3.7 1158.8,4.2 1161.7,2.5 1164.8,4.1 1167.7,2.7 1170.7,2.5 1173.5,3.4 1176.3,3.2 1179.0,1.4 1181.8,2.0 1181.8,5.2 1182.1,8.3 1183.7,11.1 1181.6,14.3 1178.1,16.0 1176.1,17.8 1173.4,18.6 1172.0,21.3 1169.4,22.2 1168.3,25.1 1169.4,28.2 1168.0,31.0 1169.3,34.1 1168.2,37.0 1168.9,39.5 1168.7,42.2 1170.9,44.2 1171.5,46.7 1171.7,49.4 1172.8,51.7 1173.1,54.3 1176.3,54.1 1179.1,55.3 1181.8,56.8 1183.9,54.9 1187.2,55.2 1189.3,53.4 1191.6,51.8 1193.3,49.2 1192.5,45.9 1194.1,43.2 1197.0,43.2 1199.5,41.1 1202.4,41.4 1205.2,40.7 1209.0,40.4 1212.6,39.5 1212.0,42.1 1209.9,44.1 1209.7,46.9 1208.9,49.4 1206.4,50.5 1203.6,51.1 1201.5,53.1 1201.8,56.1 1199.1,58.4 1199.3,61.4 1199.0,64.2 1197.7,66.8 1195.4,68.7 1194.9,71.8 1192.9,74.0 1191.5,76.6 1192.1,79.5 1192.2,82.4 1191.6,85.1 1188.6,84.9 1185.9,86.1 1183.0,86.4 1180.0,86.7 1177.3,85.0 1174.2,86.2 1171.6,84.0 1168.5,84.9 1165.7,83.9 1163.3,85.8 1160.6,87.4 1159.1,90.2 1157.1,92.5" fill="none" stroke="#141414" stroke-width="1.25" stroke-linejoin="round"/>
<polyline points="1158.3,106.1 1160.4,107.8 1163.1,108.6 1165.8,109.4 1168.1,110.8 1170.2,112.5 1172.0,114.8 1174.4,116.0 1177.5,115.5 1180.6,115.4 1183.7,116.0 1186.7,114.8 1188.7,117.3 1189.7,120.3 1190.4,123.4 1188.4,125.4 1187.8,128.5 1186.1,130.8 1183.8,132.5 1181.8,134.5 1179.5,135.9 1176.9,135.8 1174.5,136.6 1171.8,136.3 1169.4,137.0 1167.0,136.2 1164.3,136.4 1162.1,134.8 1159.6,134.5 1159.2,137.4 1159.6,140.4 1158.3,143.1 1155.5,143.7 1154.2,146.6 1152.1,148.2 1149.9,149.8 1147.2,150.5 1146.2,152.9 1144.9,155.2 1144.4,157.8 1144.5,160.5 1143.5,162.9 1142.1,165.7 1139.8,167.8 1137.6,169.5 1134.8,168.7 1132.3,169.5 1129.9,170.3" fill="none" stroke="#141414" stroke-width="1.25" stroke-linejoin="round"/>
<polyline points="1190.4,116.0 1192.0,112.7 1194.1,109.8 1196.6,109.6 1199.0,108.7 1201.7,109.3 1204.0,108.4 1206.4,107.4 1208.3,109.2 1208.5,112.1 1211.5,113.2 1212.0,115.9 1213.7,117.9 1215.4,119.8 1216.3,122.2 1218.5,120.6 1221.4,121.6 1223.4,119.3 1226.2,119.8 1228.9,120.1 1231.1,118.5 1233.1,116.2 1235.6,114.6 1238.5,113.5 1239.2,111.1 1239.4,108.6 1239.8,106.1 1242.7,105.5 1245.6,104.9 1247.9,102.6 1250.9,102.4 1253.3,104.6 1255.3,107.0 1257.0,109.8 1259.4,108.1 1262.5,109.3 1265.1,108.3 1267.7,107.5 1269.9,105.2 1273.1,106.4 1275.5,104.9 1278.1,104.8 1280.5,103.7 1281.2,101.2 1282.6,98.9 1282.7,96.2 1282.9,93.6 1283.4,91.1 1284.5,88.7 1284.8,86.1 1286.6,83.9 1285.6,81.5 1286.0,78.8 1285.2,76.4 1284.2,74.0 1286.8,75.3 1289.6,75.5 1292.5,75.0 1295.1,76.1 1297.8,76.5 1300.2,75.4 1303.0,75.2 1305.2,73.7 1307.5,72.2 1310.3,72.0 1313.0,71.8 1314.8,69.2 1317.8,69.7 1320.0,67.9 1322.7,69.7 1324.1,72.5 1326.0,74.9 1327.4,77.7 1330.1,77.2 1332.7,76.6 1335.0,75.2 1337.1,73.3 1340.1,73.4 1342.2,71.6 1343.4,69.2 1344.7,66.8 1347.4,65.5 1348.4,62.9 1349.6,60.5 1353.0,60.5 1356.2,60.0 1359.5,59.2 1360.7,61.7 1363.4,62.5 1364.8,64.9 1367.0,66.3 1368.6,68.3 1371.2,69.3 1372.7,71.5 1375.0,72.8 1375.9,75.3 1377.1,77.7 1379.9,77.5 1382.6,77.6 1385.2,78.8 1388.1,77.8 1390.7,79.0 1393.7,78.1 1395.2,75.0 1398.1,74.0 1399.4,78.5 1403.1,77.4 1406.8,78.5" fill="none" stroke="#141414" stroke-width="1.25" stroke-linejoin="round"/>
<polyline points="1208.9,-6.0 1209.7,-3.3 1207.6,-0.9 1208.8,1.8 1209.1,4.4 1209.2,7.1 1209.1,9.7 1207.4,12.2 1207.7,14.8 1209.8,16.3 1212.1,17.7 1214.3,19.0 1217.3,18.8 1219.0,21.1 1221.6,21.9 1223.7,23.4 1224.3,26.2 1226.2,28.4 1228.9,29.3 1231.6,29.5 1234.4,27.8 1237.0,29.7 1239.7,30.0 1242.4,30.1 1245.2,28.3 1247.9,28.7 1250.6,28.6 1253.3,29.6 1255.6,28.1 1258.4,29.5 1260.8,29.0 1263.2,28.1 1265.8,28.1 1268.2,27.2 1270.5,26.0 1272.9,25.1 1275.4,24.7 1278.1,25.7 1280.5,24.7 1283.3,23.6 1286.2,23.5 1289.1,23.3 1291.9,21.9 1294.8,22.1 1297.8,22.2 1297.7,19.2 1299.1,16.5 1298.7,13.5 1299.0,10.6 1300.9,7.9 1300.2,4.9 1299.3,2.2 1299.1,-0.8 1297.7,-3.4 1296.5,-6.0" fill="none" stroke="#141414" stroke-width="1.25" stroke-linejoin="round"/>
<polyline points="1300.2,22.2 1301.7,19.4 1304.5,18.1 1306.8,16.2 1309.5,14.7 1311.3,12.3 1313.4,14.1 1314.6,16.7 1316.8,18.6 1319.2,20.1 1319.9,23.2 1322.4,24.7 1323.8,27.9 1322.5,31.4 1323.7,34.6 1326.3,34.5 1328.9,34.7 1331.2,35.7 1333.5,37.0 1335.5,34.9 1337.4,32.6 1337.0,29.0 1339.4,27.1 1340.9,24.7 1342.8,26.7 1344.1,29.3 1347.0,30.4 1348.3,32.9 1350.4,34.7 1352.0,37.0 1352.6,39.8 1355.0,41.7 1354.8,44.9 1357.4,46.7 1358.8,49.1 1359.0,52.1 1360.7,54.3 1361.9,56.8 1365.3,57.2 1368.1,59.2" fill="none" stroke="#141414" stroke-width="1.25" stroke-linejoin="round"/>
<polyline points="1129.9,170.3 1132.0,171.7 1134.9,171.7 1136.5,174.3 1138.8,175.3 1141.0,176.6 1143.5,177.4 1146.0,178.0 1148.3,179.2 1150.6,180.3 1152.3,182.5 1155.5,182.0 1156.9,184.8 1159.6,185.1 1161.4,182.4 1164.1,180.9 1166.6,179.1 1169.4,177.7 1171.9,178.9 1174.7,178.4 1177.3,178.4 1179.8,179.9 1182.6,178.7 1185.2,179.6 1187.8,180.1 1190.4,180.9 1193.0,181.2 1195.7,181.3 1198.4,180.9 1201.0,181.2 1203.7,181.2 1206.2,183.1 1208.9,182.6 1209.8,185.2 1210.9,187.8 1213.3,189.7 1214.0,192.4 1214.5,195.2 1216.3,197.4 1215.5,201.1 1215.1,204.8 1215.5,207.4 1214.4,209.7 1213.0,212.1 1214.0,214.8 1213.7,217.3 1212.6,219.6 1210.6,221.6 1207.8,222.5 1205.3,223.9 1204.0,226.8 1201.7,228.5 1199.0,229.5 1196.7,230.8 1194.2,231.3 1191.6,231.6 1189.4,233.1 1186.8,233.5 1184.4,234.5 1181.4,233.5 1179.1,234.8 1177.1,236.9 1174.0,235.7 1172.1,238.4 1169.4,238.2 1166.9,238.0 1164.7,236.3 1162.1,236.3 1159.6,236.0 1157.0,236.3 1154.6,235.7 1151.9,235.6 1149.8,233.9 1146.9,234.3 1144.5,233.4 1142.2,232.2 1139.5,232.3 1137.2,230.7 1135.0,229.1 1132.5,228.6 1129.9,228.3" fill="none" stroke="#141414" stroke-width="1.25" stroke-linejoin="round"/>
<polyline points="1216.3,195.0 1218.8,195.6 1221.2,196.5 1223.7,196.8 1226.4,196.7 1228.6,198.3 1231.1,198.7 1233.7,199.7 1235.8,201.7 1238.1,203.2 1241.0,203.5 1243.4,205.0 1245.9,206.1 1247.2,208.6 1249.5,210.2 1251.6,212.0 1252.4,214.8 1253.9,217.1 1255.8,219.0 1257.7,221.0 1259.1,223.3 1261.2,225.2 1263.2,227.0 1265.6,227.7 1268.2,227.7 1270.7,227.8 1273.0,229.0 1275.7,228.2 1278.0,229.5 1277.2,232.1 1275.5,234.4 1274.8,237.0 1274.0,239.6 1273.9,242.5 1272.6,244.9 1271.6,247.5 1270.6,250.0 1271.6,253.3 1273.1,256.3 1272.3,258.8 1270.7,261.1 1269.2,263.3 1269.8,266.5 1267.8,268.5 1266.6,270.9 1266.4,273.7 1265.2,276.1 1263.2,278.1 1263.2,281.0 1265.8,283.4 1266.4,286.8 1268.1,289.7 1266.7,292.0 1263.8,292.7 1261.6,294.1 1260.2,296.5 1258.3,298.3 1256.2,300.3 1253.3,300.6 1250.8,301.9 1248.4,303.2 1245.9,304.4 1244.0,306.5 1241.6,307.9 1239.2,309.2 1237.4,311.4 1235.4,313.2 1232.5,313.9 1231.3,316.9 1228.7,318.0 1226.5,320.2 1225.2,323.1 1222.7,325.1 1221.3,327.9 1218.6,329.1 1215.5,327.5 1212.9,329.3 1210.1,330.3 1207.2,330.2 1204.4,330.3 1201.5,330.4 1201.5,333.3 1199.6,335.4 1198.5,337.9 1196.9,340.1 1196.5,342.9 1195.7,345.4 1194.1,347.7" fill="none" stroke="#141414" stroke-width="1.25" stroke-linejoin="round"/>
<polyline points="1273.1,223.4 1275.4,222.1 1278.2,222.6 1280.8,222.4 1283.0,220.9 1285.3,219.6 1288.1,220.2 1290.3,218.7 1292.7,217.6 1295.1,216.8 1297.9,217.6 1300.4,217.0 1302.8,216.0 1305.2,215.0 1307.7,214.5 1310.0,213.1 1312.9,214.1 1315.0,212.1 1317.6,212.1 1320.2,211.9 1322.6,211.2 1324.9,209.8 1327.3,208.8 1329.9,208.7 1332.1,207.1 1334.8,207.3 1336.8,209.6 1339.9,210.3 1342.2,212.2 1344.8,213.0 1347.4,211.7 1350.0,212.2 1352.4,211.3 1354.8,210.4 1357.4,210.2 1359.7,209.0 1362.1,208.0 1364.8,208.5 1367.1,209.8 1369.9,209.7 1372.4,210.4 1374.8,211.4 1377.1,212.6 1379.6,213.5 1382.0,212.5 1384.6,212.1 1387.0,211.0 1387.9,213.7 1389.5,216.0 1392.3,215.5 1395.2,216.6 1398.0,216.3 1400.7,214.2 1403.6,215.8 1406.4,215.8 1409.2,214.7 1411.9,213.2 1413.1,210.1 1416.4,209.3 1418.3,207.0 1420.3,204.8" fill="none" stroke="#141414" stroke-width="1.25" stroke-linejoin="round"/>
<polyline points="1342.2,212.2 1344.5,213.7 1345.9,215.8 1345.5,219.1 1347.5,220.9 1349.7,222.5 1351.4,224.4 1352.0,227.0 1354.2,229.1 1355.5,231.7 1356.0,234.8 1358.3,236.8 1360.2,239.1 1361.0,242.0 1361.9,246.5 1360.3,248.8 1359.9,251.5 1360.6,254.4 1358.3,256.6 1358.3,259.3 1357.2,261.8 1356.8,264.4 1355.6,266.9 1355.2,269.5 1354.4,272.0 1354.5,274.8" fill="none" stroke="#141414" stroke-width="1.25" stroke-linejoin="round"/>
<polyline points="1487.0,211.0 1488.4,213.4 1488.1,216.3 1489.2,218.8 1489.4,221.5 1490.8,223.9 1490.6,226.8 1492.1,229.2 1493.4,231.6 1494.2,234.1 1494.4,236.9 1491.6,238.2 1488.6,237.8 1485.7,238.2 1487.0,241.0 1486.4,244.1 1487.5,247.0 1487.0,250.0 1487.7,252.7 1488.4,255.3 1489.0,258.0 1489.0,260.9 1491.6,263.1 1490.4,266.2 1491.9,268.7 1489.5,269.6 1486.9,270.2 1484.5,271.1 1483.7,273.9 1482.9,276.8 1483.3,279.8 1480.6,280.4 1477.8,280.6 1474.9,279.6 1472.2,281.0 1472.9,284.0 1471.4,286.9 1471.1,289.9 1472.2,292.9 1470.9,295.8 1468.4,296.2 1465.9,296.6 1463.3,296.7 1461.1,298.3 1461.7,301.0 1460.5,303.8 1461.8,306.5 1462.1,309.2 1462.3,311.9 1463.4,315.4 1466.0,318.0 1468.4,316.5 1471.3,317.6 1473.9,316.9 1476.4,315.8 1479.3,316.5 1481.7,314.9 1484.4,314.7 1487.0,314.3 1488.9,312.5 1490.7,310.6 1492.7,312.3 1495.6,312.3 1497.6,313.9 1499.9,315.0 1502.0,316.4 1504.0,318.1 1506.9,318.1 1508.6,320.4 1511.3,320.6 1513.5,322.0 1516.0,322.7 1518.0,324.3 1520.3,325.4 1523.6,325.2 1526.2,323.3 1528.9,321.7" fill="none" stroke="#141414" stroke-width="1.25" stroke-linejoin="round"/>
<polyline points="1413.7,-6.0 1413.6,-3.2 1415.3,-0.9 1415.9,1.7 1416.6,4.4 1416.5,7.1 1417.0,9.8 1417.9,12.3 1418.2,15.0 1420.6,16.9 1420.0,19.9 1420.5,22.5 1422.2,24.7 1424.1,26.8 1424.0,29.6 1425.6,31.6 1427.5,33.5 1428.3,35.9 1428.1,39.0 1430.2,40.7 1432.6,39.7 1434.9,38.6 1437.3,37.6 1439.7,36.6 1441.7,34.8 1443.8,33.3 1446.4,32.6 1448.9,31.7 1451.4,30.9 1453.7,29.6 1456.1,28.1 1458.4,26.6 1460.1,24.1 1462.9,23.3 1464.9,21.3 1467.2,19.7 1469.8,21.0 1472.9,20.3 1475.6,21.2 1478.4,21.6 1480.8,23.4 1482.4,26.3 1484.2,28.9 1487.0,30.8" fill="none" stroke="#141414" stroke-width="1.25" stroke-linejoin="round"/>
<polyline points="1268.1,289.7 1270.6,289.6 1273.0,288.4 1275.7,288.9 1278.1,288.3 1280.5,287.3 1282.8,286.2 1285.3,285.8 1287.8,285.5 1290.2,284.8 1292.8,284.7 1294.6,287.1 1295.9,289.8 1297.8,292.1 1300.8,292.7 1303.4,290.3 1306.4,291.1 1309.1,289.5 1312.0,289.2 1315.0,289.7 1317.0,287.9 1317.9,285.4 1319.9,283.6 1320.4,280.8 1320.9,278.1 1323.0,276.4 1324.8,274.4 1326.9,272.6 1327.4,269.9 1329.7,271.4 1332.3,270.7 1334.8,271.0 1337.4,270.8 1339.7,272.5 1342.3,271.9 1344.8,272.2 1347.3,272.4 1349.8,272.8 1352.0,274.8 1354.5,274.8" fill="none" stroke="#141414" stroke-width="1.25" stroke-linejoin="round"/>
<polyline points="1462.3,311.9 1459.5,312.8 1456.8,310.8 1454.0,312.8 1451.2,311.9 1448.3,312.6 1446.7,315.5 1444.4,317.2 1441.1,317.2 1439.2,319.6 1436.4,320.5 1434.2,318.5 1431.1,318.0 1428.4,316.7 1426.5,314.3 1424.0,315.4 1422.0,317.1 1419.7,318.4 1417.7,320.2 1416.5,323.0 1413.6,323.6 1411.7,325.4 1409.5,323.6 1406.7,322.7 1404.8,320.3 1401.5,320.3 1399.9,317.5 1397.1,316.6 1394.4,315.6 1392.0,317.3 1389.3,317.9 1386.3,317.1 1383.6,317.4 1381.3,319.6 1378.4,319.3 1377.2,316.7 1377.2,313.8 1375.2,311.5 1375.9,308.3 1374.2,305.9 1373.4,303.2 1374.3,300.5 1376.5,298.9 1378.5,297.2 1379.9,294.9 1382.0,293.2 1383.3,290.9 1380.6,291.4 1378.2,289.7 1375.5,290.4 1372.9,289.5 1370.3,289.2 1367.7,289.4 1365.1,289.2 1362.6,288.0 1359.9,288.4 1360.2,285.6 1359.1,283.3 1357.9,280.9 1356.6,278.6 1355.4,276.3 1356.7,273.3 1354.9,271.1 1357.7,272.4 1360.5,273.5 1363.6,273.6 1362.2,271.3 1361.8,268.6 1361.5,265.8 1360.2,263.4 1358.6,261.2 1357.4,258.8 1358.9,256.1 1361.0,253.8 1363.7,251.9 1364.8,248.9 1363.3,246.6 1362.3,244.0" fill="none" stroke="#141414" stroke-width="1.25" stroke-linejoin="round"/>
<polyline points="1297.8,292.1 1298.4,295.0 1299.5,297.6 1299.9,300.6 1301.1,303.2 1302.7,305.7 1305.2,306.6 1307.7,307.5 1309.6,309.3 1311.5,311.0 1313.5,312.7 1315.4,314.5 1317.6,316.0 1320.8,315.7 1322.4,318.0 1325.0,319.9 1327.9,321.1 1331.1,321.7 1328.1,322.9 1326.1,325.3 1324.0,327.7 1321.2,329.1 1320.8,331.8 1321.3,334.3 1321.9,336.9 1321.8,339.5 1323.4,341.9 1324.4,344.4 1323.7,347.1 1323.5,349.8 1325.3,352.1 1324.4,354.9 1324.4,357.5 1326.3,359.8 1326.1,362.5 1328.1,364.5 1330.2,366.5 1332.7,368.0 1334.8,369.9 1336.0,372.2 1336.3,374.7 1335.7,377.4 1336.1,379.9 1337.3,382.2 1338.7,384.5 1337.5,387.3 1338.1,389.7 1339.8,391.9 1339.7,394.5 1342.7,394.7 1345.6,395.4 1348.6,395.4 1351.5,394.6 1354.5,394.5 1357.0,393.7 1359.6,393.3 1361.9,391.7 1364.4,391.0 1366.9,390.3 1369.8,390.7 1372.2,389.6 1374.8,390.5 1377.1,392.2 1379.7,393.1 1382.1,394.5" fill="none" stroke="#141414" stroke-width="1.25" stroke-linejoin="round"/>
<polyline points="1326.1,363.7 1323.4,364.5 1321.1,366.2 1318.5,367.4 1315.2,366.2 1313.0,368.4 1310.5,369.9 1307.6,369.9 1305.4,371.5 1303.1,373.0 1302.1,375.9 1299.4,376.9 1297.7,379.1 1295.5,380.6 1294.2,383.3 1292.2,385.0 1288.7,385.2 1286.9,387.2 1285.4,389.6 1283.0,390.9 1280.4,391.9 1278.3,393.8 1275.3,394.0 1273.2,395.9 1270.2,396.1 1267.9,397.7 1265.7,399.5 1262.9,399.5 1260.1,399.9 1257.9,402.1 1255.4,403.3 1252.7,403.7 1250.0,404.4 1247.2,404.4" fill="none" stroke="#141414" stroke-width="1.25" stroke-linejoin="round"/>
<polyline points="1247.2,404.4 1249.9,404.5 1252.3,405.4 1254.2,407.5 1256.2,409.1 1258.9,409.3 1260.8,411.3 1263.2,412.2 1266.3,411.4 1268.2,413.5 1270.6,414.3 1269.6,416.9 1268.1,419.2 1265.2,420.1 1262.4,418.1 1259.5,419.8 1256.6,419.1 1253.8,418.9 1250.9,419.2 1251.9,422.3 1254.3,424.4 1256.6,426.5 1258.3,429.1 1260.8,429.4 1263.4,429.1 1265.5,431.4 1268.0,431.8 1270.7,430.5 1273.3,430.5 1275.7,431.4 1278.1,432.0 1280.3,433.7 1282.8,434.1 1285.3,434.4 1287.9,434.0 1290.6,433.6 1292.7,435.9 1295.2,436.3 1297.7,436.8 1299.9,438.2 1302.9,436.8 1305.3,437.6 1307.6,439.0 1306.1,441.2 1304.7,443.5 1304.3,446.2 1304.1,449.0 1302.7,451.3 1303.9,453.5 1305.0,455.9 1307.7,457.1 1308.7,459.5 1310.2,461.6 1311.9,463.5 1312.6,466.1 1315.1,466.9 1317.8,467.1 1320.2,468.1 1322.7,468.8 1324.8,470.8 1327.7,470.3 1329.7,472.7 1332.5,472.4 1335.1,472.9 1337.2,474.8 1339.9,475.9 1342.8,474.5 1345.5,476.2 1348.3,476.2 1351.1,476.4 1354.0,474.9 1356.7,475.7 1359.5,476.0 1361.2,473.8 1364.5,474.0 1366.6,472.4 1368.5,470.6 1370.5,468.8 1372.6,467.2 1375.0,466.1" fill="none" stroke="#141414" stroke-width="1.25" stroke-linejoin="round"/>
<polyline points="1206.4,467.3 1207.2,470.0 1209.3,471.8 1210.5,474.3 1212.9,475.9 1214.2,478.3 1215.1,480.9 1212.5,482.9 1209.1,482.5 1206.4,484.0 1204.0,485.0 1202.1,487.0 1199.0,486.6 1197.3,488.9 1194.8,489.7 1192.7,491.4 1190.2,492.2 1187.3,492.2 1185.5,494.3 1183.0,495.1 1184.0,497.7 1183.4,500.4 1184.0,503.1 1182.9,505.8 1184.9,508.4 1184.2,511.1 1185.6,513.6 1189.0,513.6 1189.8,516.8 1192.2,518.0 1194.9,518.8 1196.6,521.0 1199.0,519.4 1201.2,517.5 1203.7,515.9 1206.4,514.8 1208.9,515.9 1210.8,517.8 1212.1,520.5 1214.2,522.1 1216.5,523.6 1219.7,523.7 1221.3,526.0 1223.9,526.1 1226.0,527.9 1228.9,526.6 1231.0,528.6 1233.7,528.2 1235.8,530.2 1238.5,529.7 1240.7,528.1 1243.6,529.3 1245.8,527.8 1248.2,526.8 1250.6,525.9 1253.5,527.3 1255.8,526.0 1259.5,528.4 1261.1,526.0 1262.0,523.1 1264.0,521.0 1265.7,518.6 1268.7,519.1 1271.4,517.1 1274.4,517.5 1277.1,516.1 1280.0,515.8 1283.0,516.1 1285.2,517.7 1287.7,518.5 1290.6,518.4 1293.2,519.1 1295.3,521.0 1296.0,518.1 1298.5,516.2 1299.7,513.6 1300.8,510.9 1302.7,508.7 1305.2,506.4 1308.6,505.6 1311.3,503.7 1314.1,503.8 1316.8,503.6 1319.4,502.7 1321.9,501.4 1324.6,500.7 1327.4,501.3 1329.4,499.4 1330.3,496.9 1332.4,495.1 1332.7,492.1 1335.7,490.9 1336.3,488.1 1338.8,486.6 1339.7,484.0 1339.7,480.7 1338.0,477.9 1337.2,474.8" fill="none" stroke="#141414" stroke-width="1.25" stroke-linejoin="round"/>
<polyline points="1243.5,463.6 1246.2,463.1 1248.2,465.8 1250.9,465.4 1253.2,466.9 1256.0,466.2 1258.5,466.6 1260.6,468.7 1263.3,468.3 1265.9,468.4 1268.3,469.5 1270.6,470.6 1273.4,469.9 1275.6,471.7 1278.1,472.1 1280.5,472.9 1283.0,473.5 1285.6,475.0 1286.6,478.0 1288.3,480.3 1290.2,482.5 1292.8,484.0 1294.0,486.3 1294.0,489.1 1295.3,491.4 1297.5,492.7 1298.9,494.9 1301.9,495.2 1302.8,498.2 1304.7,499.9 1307.3,500.6 1309.3,502.2 1311.3,503.7" fill="none" stroke="#141414" stroke-width="1.25" stroke-linejoin="round"/>
<polyline points="1243.5,463.6 1243.4,466.5 1243.4,469.4 1244.6,472.3 1242.4,475.2 1244.1,478.1 1243.5,481.0 1246.0,482.6 1248.1,484.5 1249.8,486.8 1250.8,489.8 1253.3,491.4 1253.5,494.2 1252.6,496.6 1250.9,498.8 1252.5,501.1 1255.3,502.3 1257.6,504.0 1258.6,506.9 1260.7,508.7 1261.8,511.3 1263.2,513.7 1264.0,516.3 1265.7,518.6" fill="none" stroke="#141414" stroke-width="1.25" stroke-linejoin="round"/>
<polyline points="1135.0,499.0 1137.7,498.9 1139.6,501.4 1142.2,501.9 1145.1,501.2 1147.5,502.2 1149.7,503.8 1152.2,504.6 1154.8,504.9 1157.1,506.2 1160.2,506.6 1162.7,508.5 1165.8,509.1 1168.2,511.1 1166.1,512.9 1163.7,514.5 1162.8,517.6 1160.2,518.9 1158.3,521.0 1158.7,524.0 1160.9,526.3 1160.4,529.6 1162.0,532.1 1163.2,534.8 1166.1,535.8 1168.0,537.8 1169.2,540.4 1171.7,541.9 1173.8,543.6 1175.6,545.7 1177.0,548.1 1179.3,549.5 1182.0,550.4 1184.2,551.8 1186.1,553.7 1187.9,555.6 1189.3,558.0 1189.4,561.0 1191.0,563.3 1192.0,565.9 1194.1,567.9 1196.8,567.5 1199.3,566.6 1201.1,563.9 1204.0,563.8 1206.8,563.7 1208.9,561.7 1210.6,559.3 1209.8,556.1 1210.9,553.6 1212.2,551.0 1212.6,548.2 1215.4,547.9 1218.2,548.3 1220.9,547.2 1223.7,548.2 1226.1,547.6 1228.6,547.4 1230.9,545.9 1233.4,545.7 1236.2,547.2 1238.5,545.7 1241.3,545.0 1243.9,544.2 1246.1,542.3 1248.4,540.8 1250.3,538.6 1251.6,536.2 1252.9,533.8 1253.3,530.9 1256.0,528.7 1259.5,528.4" fill="none" stroke="#141414" stroke-width="1.25" stroke-linejoin="round"/>
<polyline points="1259.5,528.4 1262.1,529.4 1264.9,529.3 1267.3,530.9 1270.2,530.8 1272.7,532.1 1275.1,533.6 1278.0,533.4 1280.2,534.8 1282.8,535.2 1284.8,536.9 1287.2,537.8 1288.9,540.0 1291.9,539.8 1294.1,541.0 1296.1,542.8 1298.9,542.9 1300.7,545.0 1302.6,546.9 1305.3,547.1 1307.6,548.2 1309.9,550.3 1311.4,553.1 1313.1,555.6 1315.0,558.0 1316.4,560.6 1317.1,563.4 1317.7,566.1 1317.5,569.1" fill="none" stroke="#141414" stroke-width="1.25" stroke-linejoin="round"/>
<polyline points="1175.6,545.7 1173.7,548.0 1171.3,549.8 1169.3,552.0 1167.1,554.1 1164.5,555.6 1163.4,558.6 1160.7,560.4 1158.3,562.5 1157.1,565.4 1159.4,567.0 1162.0,568.4 1164.3,569.9 1167.3,570.5 1169.2,572.9 1172.0,573.8 1174.4,575.3 1173.0,578.4 1171.9,581.5 1169.3,582.1 1167.0,583.3 1164.6,584.6 1162.2,585.6 1159.8,586.5 1157.1,586.8 1154.6,587.7 1154.0,590.6 1152.7,593.4 1152.1,596.3 1151.1,599.4 1148.7,601.5 1145.9,603.2 1144.7,606.2 1144.0,608.7 1142.1,610.6 1141.1,612.9 1140.3,615.3 1138.6,617.3 1137.9,620.0 1139.9,622.2 1139.2,624.8 1141.0,627.0 1141.6,629.5 1140.2,632.2 1141.6,634.5 1142.9,636.9 1142.3,639.5" fill="none" stroke="#141414" stroke-width="1.25" stroke-linejoin="round"/>
<polyline points="1129.0,592.6 1131.1,594.1 1133.0,595.9 1134.5,598.1 1137.4,598.7 1139.2,600.6 1140.1,603.6 1142.4,604.9 1144.7,606.2" fill="none" stroke="#141414" stroke-width="1.25" stroke-linejoin="round"/>
<polyline points="1129.0,644.4 1130.3,641.4 1132.6,639.2 1134.9,637.0 1137.5,637.5 1139.7,639.0 1142.3,639.5 1144.0,641.4 1145.5,643.5 1147.4,645.1 1149.7,646.3 1151.2,648.4 1153.0,650.1 1154.8,651.8 1157.1,653.1 1159.6,653.8 1161.8,655.2 1164.3,655.8 1166.7,657.0 1169.4,656.8 1172.1,656.6 1174.1,658.9 1177.1,657.5 1179.1,659.9 1181.7,660.1 1184.2,660.5 1186.7,659.0 1189.7,658.5 1191.7,656.2 1194.0,654.4 1196.6,653.1 1198.8,654.9 1201.1,656.3 1203.9,657.0 1206.6,657.8 1208.9,659.1 1211.4,660.4 1213.8,661.7" fill="none" stroke="#141414" stroke-width="1.25" stroke-linejoin="round"/>
<polyline points="1378.4,319.3 1376.0,321.0 1374.6,323.7 1372.2,325.4 1374.0,327.3 1375.4,329.6 1377.1,331.6 1374.8,333.1 1372.4,334.4 1369.4,334.7 1366.9,335.8 1364.8,337.7 1362.4,339.1 1359.9,340.2 1362.3,342.2 1364.0,344.9 1366.1,347.1 1367.3,350.1 1370.3,350.3 1373.2,350.3 1376.2,349.2 1379.1,351.1 1382.1,350.1 1384.8,351.2 1386.6,353.7 1389.1,355.2 1391.4,356.9 1394.4,357.5 1392.4,360.5 1389.5,362.5 1392.3,363.3 1394.6,365.3 1398.0,364.4 1400.7,365.4 1403.1,367.4 1404.8,369.4 1406.8,371.1 1408.0,373.6 1410.1,375.2 1412.3,376.7 1413.4,379.3 1416.0,380.4 1417.9,382.2 1419.4,384.4 1421.6,385.9 1423.2,383.6 1424.9,381.5 1427.0,379.7 1428.4,377.2 1431.2,376.0 1432.5,373.5 1433.9,371.1 1436.4,371.9 1439.1,371.6 1441.4,372.9 1443.8,373.7 1446.2,374.7 1448.7,375.5 1451.2,376.0 1454.8,377.1 1458.6,376.5" fill="none" stroke="#141414" stroke-width="1.25" stroke-linejoin="round"/>
<polyline points="1389.5,362.5 1389.6,365.2 1391.6,367.1 1392.8,369.3 1393.5,371.8 1393.8,374.4 1396.2,376.1 1396.9,378.5 1394.4,379.5 1391.7,379.9 1389.8,382.3 1387.2,383.0 1384.1,382.7 1382.1,384.7 1383.4,387.1 1385.8,388.4 1388.3,389.6 1388.9,392.7 1391.0,394.3 1393.2,395.8 1390.0,396.4 1387.0,397.2 1384.6,399.5 1384.1,402.9 1385.6,406.0 1385.8,409.3 1383.8,411.1 1381.4,411.9 1378.9,412.5 1376.6,413.6 1374.6,415.3 1372.3,416.4 1369.7,416.8 1368.8,419.2 1368.3,421.6 1368.2,424.2 1367.3,426.6" fill="none" stroke="#141414" stroke-width="1.25" stroke-linejoin="round"/>
<polyline points="155.5,553.3 152.4,552.5 149.5,553.7 146.6,554.3 148.6,556.6 148.8,559.5 149.6,562.2 147.2,563.3 145.9,565.7 143.4,566.6 142.4,569.4 139.7,570.1 140.8,572.6 140.3,575.6 141.7,578.0 138.3,576.8 134.8,576.0" fill="none" stroke="#141414" stroke-width="1.25" stroke-linejoin="round"/>
<polyline points="409.4,854.0 409.2,856.5 410.5,858.9 410.1,861.5 410.3,864.0 413.1,865.1 415.9,865.9 414.0,867.7 411.4,868.3 409.4,869.8 406.7,870.2 405.1,872.4 403.2,874.0 400.9,875.2 403.9,877.4 405.6,880.8 408.6,880.8 411.1,882.9 414.3,882.2 417.1,883.0 419.7,884.6 422.1,883.5 424.7,884.0 427.2,884.4 429.7,883.6 432.2,883.7 434.6,882.7" fill="none" stroke="#141414" stroke-width="1.25" stroke-linejoin="round"/>
<polygon points="1120.0,23.4 1123.5,23.0 1126.9,22.9 1130.4,23.7 1133.8,23.2 1137.3,23.4 1137.0,26.5 1137.2,29.7 1137.2,32.9 1137.0,36.0 1137.0,39.2 1136.1,42.3 1136.3,45.5 1136.4,48.7 1136.1,51.8 1139.1,53.2 1142.1,54.7 1145.2,55.8 1147.8,58.1 1150.9,59.2 1148.1,60.4 1145.2,61.3 1142.6,63.0 1139.8,64.2 1139.4,67.3 1139.4,70.4 1139.4,73.5 1138.6,76.5 1135.5,76.3 1132.4,76.5 1129.3,77.3 1126.2,76.9 1123.1,77.2 1120.0,77.7" fill="#381d9c" stroke="#141414" stroke-width="1.25" stroke-linejoin="round"/>
<polygon points="1120.0,81.4 1123.2,81.1 1126.5,81.2 1129.8,81.4 1133.0,80.8 1136.3,81.1 1139.5,80.2 1142.7,80.2 1146.0,80.2 1149.6,82.8 1153.4,85.1 1154.9,87.9 1156.0,90.8 1157.1,93.8 1156.8,96.8 1157.3,99.9 1157.1,102.9 1157.8,105.9 1158.0,108.9 1157.9,112.0 1158.2,115.0 1157.5,118.0 1158.3,121.0 1158.1,124.1 1158.3,127.1 1154.6,127.9 1150.9,127.9 1147.2,128.3 1144.7,126.4 1142.2,124.3 1139.8,122.2 1136.6,123.2 1133.3,123.8 1129.8,123.7 1126.6,124.8 1123.3,125.5 1120.0,125.9" fill="#381d9c" stroke="#141414" stroke-width="1.25" stroke-linejoin="round"/>
<polygon points="1353.1,440.3 1353.7,437.1 1354.9,434.0 1357.7,432.1 1360.5,430.4 1363.5,428.9 1366.8,427.1 1370.4,426.1 1375.2,426.8 1377.7,430.6 1381.0,429.4 1384.2,427.8 1387.7,427.4 1391.1,427.0 1394.6,427.1 1396.7,423.7 1400.6,422.8 1404.3,421.6 1407.7,419.2 1411.2,421.3 1411.9,425.4 1410.5,428.5 1408.5,431.3 1406.3,434.0 1405.1,437.3 1403.0,440.0 1400.9,442.7 1399.4,445.8 1398.7,451.3 1400.8,454.8 1398.3,456.9 1396.5,459.7 1394.2,461.9 1391.6,463.9 1389.6,466.5 1387.0,468.4 1385.3,471.3 1382.8,473.4 1380.6,476.7 1379.1,480.5 1377.3,484.0 1375.0,487.7 1372.2,491.0 1370.2,488.4 1368.0,486.0 1366.3,483.1 1369.4,481.0 1372.0,478.4 1375.3,476.7 1378.0,474.1 1375.3,470.9 1372.5,467.9 1369.0,469.3 1365.9,469.1 1362.8,468.6 1366.3,465.1 1361.4,462.4 1362.8,458.2 1358.0,454.8 1354.2,450.6 1354.1,447.5 1354.5,444.4" fill="#381d9c" stroke="#141414" stroke-width="1.25" stroke-linejoin="round"/>
<polygon points="187.5,854.0 190.8,854.1 194.1,853.7 197.3,854.4 200.6,854.0 200.6,857.4 199.9,860.7 199.6,864.0 201.0,867.8 202.4,871.5 201.5,877.1 204.3,881.8 198.7,879.9 196.6,877.7 194.9,875.2 194.3,871.4 193.1,867.7 190.7,865.0 188.4,862.1" fill="#381d9c" stroke="#141414" stroke-width="1.25" stroke-linejoin="round"/>
<polygon points="235.2,854.0 238.2,854.2 241.3,854.1 244.3,853.8 247.4,854.0 249.4,858.0 251.1,862.1 249.1,864.5 246.8,866.5 244.1,868.0 242.3,870.5 239.9,872.4 237.1,869.6 238.6,866.9 239.9,864.0 235.2,863.0" fill="#381d9c" stroke="#141414" stroke-width="1.25" stroke-linejoin="round"/>
</svg>
<div id="sb" class="a"></div>
<div id="dlg" class="a"></div>
<div class="t" style="left:548px;top:27px;font-weight:bold;letter-spacing:0.23px">Layer Properties – c_munic</div>
<div class="a" style="left:172px;top:63px;width:150px;height:785px;background:#fff;border:1px solid #b9b9b9"></div>
<div class="a sel" style="left:173px;top:98px;width:148px;height:34px"></div>
<svg class="a" style="left:177px;top:66px" width="30" height="30" viewBox="0 0 30 30">
<path d="M2.4 2 L13.8 13.4" stroke="#7d7d7d" stroke-width="3" stroke-linecap="round"/>
<path d="M2.4 2 L13.8 13.4" stroke="#f0f0f0" stroke-width="1.6" stroke-linecap="round"/>
<path d="M13.2 14.2 L4 25.2" stroke="#1d3d6a" stroke-width="5.2" stroke-linecap="round"/>
<path d="M13.2 14.2 L4 25.2" stroke="#3566a6" stroke-width="3.6" stroke-linecap="round"/>
<path d="M12.5 4.2 Q16 1.8 21 2.6 Q24 3.5 27 7 L29.3 9.6 Q29.8 11 28.6 12.3 L27 13.8 Q26 14.2 25.2 13.5 Q23 10.8 20.5 9.5 Q18.5 8.6 17.5 9.8 L16 8 Q14.5 5.8 12.5 4.2 Z" fill="#2b2f31"/>
<path d="M16.5 9.5 L19.5 12.5 L17.5 14.5 L14.8 11.5 Z" fill="#dcdcdc" stroke="#888" stroke-width="0.5"/>
<path d="M16.3 13.2 L27 25.8" stroke="#b24f08" stroke-width="5.2" stroke-linecap="round"/>
<path d="M16.3 13.2 L27 25.8" stroke="#f57a12" stroke-width="3.6" stroke-linecap="round"/>
</svg>
<svg class="a" style="left:177px;top:104px" width="30" height="26" viewBox="0 0 30 26">
<defs><linearGradient id="gy" x1="0" x2="1"><stop offset="0" stop-color="#e6e05a" stop-opacity="0"/><stop offset="0.3" stop-color="#e6e05a" stop-opacity="0.9"/><stop offset="1" stop-color="#e8dd55"/></linearGradient>
<linearGradient id="gb" x1="0" x2="1"><stop offset="0" stop-color="#8fb4e8" stop-opacity="0"/><stop offset="0.3" stop-color="#8fb4e8" stop-opacity="0.7"/><stop offset="1" stop-color="#8fb4e8" stop-opacity="0.6"/></linearGradient>
<linearGradient id="gr" x1="0" x2="1"><stop offset="0" stop-color="#d8365a" stop-opacity="0"/><stop offset="0.3" stop-color="#d8365a" stop-opacity="0.9"/><stop offset="1" stop-color="#d8365a"/></linearGradient></defs>
<path d="M4.4 4 L21.2 9.3 L20.2 12.3 L3.7 8.7 Z" fill="url(#gy)"/>
<path d="M3.7 8.7 L20.2 12.3 L17 15.7 L2.4 13 Z" fill="url(#gb)"/>
<path d="M2.2 13 L16 17 L17 23 L1.7 15.5 Z" fill="url(#gr)"/>
<path d="M10.4 15 L15.1 9.7 L23.2 17 L17.1 23.4 Z" fill="#b49a70" stroke="#7a6040" stroke-width="0.7"/>
<path d="M12 14 L20 21.5 M13.5 12.3 L21.5 19.7 M12.5 17 L18 11.5 M14.5 19 L20 13.5" stroke="#d8c7a5" stroke-width="0.6" opacity="0.8"/>
<path d="M19.5 12.2 L28.8 4.6" stroke="#6d5333" stroke-width="3.2" stroke-linecap="round"/>
<path d="M19.5 12.2 L28.8 4.6" stroke="#b88c58" stroke-width="2" stroke-linecap="round"/>
</svg>
<svg class="a" style="left:177px;top:140px" width="30" height="18" viewBox="0 0 30 18">
<path d="M1 9 L7 1.5 H28.5 V16.5 H7 Z" fill="#f5dc3a" stroke="#b39a10" stroke-width="1"/>
<text x="17.5" y="13.5" font-family="Liberation Sans" font-weight="bold" font-size="11.5" text-anchor="middle" fill="#2b2b2b">abc</text>
</svg>
<svg class="a" style="left:178px;top:170px" width="28" height="25" viewBox="0 0 28 25">
<rect x="0.5" y="0.5" width="27" height="24" fill="#ececec" stroke="#8a8a8a"/>
<rect x="1" y="1" width="26" height="3" fill="#5d86c9"/>
<path d="M3 7.5H25M3 10.5H25M3 13.5H25M3 16.5H25M3 19.5H25M3 22H25" stroke="#9a9a9a" stroke-width="1.2"/>
<path d="M9.5 5V24M18.5 5V24" stroke="#ececec" stroke-width="1.5"/>
</svg>
<svg class="a" style="left:177px;top:202px" width="30" height="28" viewBox="0 0 30 28">
<path d="M6 1.5 H24 Q28.5 1.5 28.5 6 V14 Q28.5 18.5 24 18.5 H13 L7 26 L8 18.5 H6 Q1.5 18.5 1.5 14 V6 Q1.5 1.5 6 1.5 Z" fill="#f6eaa0" stroke="#c9a84a" stroke-width="1"/>
<path d="M5 12 Q5 4 10 4 H8 Q4 5 5 12Z" fill="#fff"/>
</svg>
<svg class="a" style="left:175px;top:234px" width="33" height="33" viewBox="0 0 33 33">
<path d="M28.70 12.50 L30.94 13.70 L30.31 16.43 L27.77 16.53 L26.55 18.41 L27.49 20.77 L25.25 22.46 L23.24 20.90 L21.10 21.56 L20.30 23.97 L17.50 23.83 L16.96 21.34 L14.90 20.47 L12.74 21.80 L10.69 19.89 L11.87 17.64 L10.85 15.65 L8.34 15.28 L8.00 12.50 L10.35 11.54 L10.85 9.35 L9.16 7.46 L10.69 5.11 L13.11 5.88 L14.90 4.53 L14.82 1.99 L17.50 1.17 L18.86 3.32 L21.10 3.44 L22.67 1.45 L25.25 2.54 L24.91 5.06 L26.55 6.59 L29.03 6.07 L30.31 8.57 L28.43 10.27Z" fill="#e9e9e9" stroke="#8d8d8d" stroke-width="1"/>
<circle cx="19.5" cy="12.5" r="6.8" fill="#5e8fcf" stroke="#3d6aa8"/><path d="M17 8.8 L23.5 12.5 L17 16.2 Z" fill="#fff"/>
<ellipse cx="21" cy="24" rx="9" ry="1.5" fill="#000" opacity="0.12"/>
<path d="M11.60 26.00 L12.96 26.71 L12.54 28.30 L11.01 28.25 L10.25 29.25 L10.71 30.71 L9.30 31.54 L8.25 30.43 L7.00 30.60 L6.29 31.96 L4.70 31.54 L4.75 30.01 L3.75 29.25 L2.29 29.71 L1.46 28.30 L2.57 27.25 L2.40 26.00 L1.04 25.29 L1.46 23.70 L2.99 23.75 L3.75 22.75 L3.29 21.29 L4.70 20.46 L5.75 21.57 L7.00 21.40 L7.71 20.04 L9.30 20.46 L9.25 21.99 L10.25 22.75 L11.71 22.29 L12.54 23.70 L11.43 24.75Z" fill="#e9e9e9" stroke="#8d8d8d" stroke-width="0.8"/>
<circle cx="7" cy="26" r="3.4" fill="#6c98d4" stroke="#3d6aa8" stroke-width="0.7"/>
</svg>
<svg class="a" style="left:175px;top:271px" width="34" height="29" viewBox="0 0 34 29">
<defs><linearGradient id="gj" x1="0" y1="0" x2="0" y2="1"><stop offset="0" stop-color="#9cc0ea"/><stop offset="0.5" stop-color="#3f70b8"/><stop offset="1" stop-color="#6f9fdc"/></linearGradient></defs>
<circle cx="5" cy="14" r="4" fill="#3c6aac" stroke="#2a4f86" stroke-width="0.6"/>
<path d="M10 14 L30 1 Q32 3 31 8 L33 10 V19 L31 21 Q32 26 30 28 Z" fill="url(#gj)" stroke="#2b5590" stroke-width="0.8"/>
</svg>
<svg class="a" style="left:177px;top:306px" width="30" height="22" viewBox="0 0 30 22">
<rect x="3" y="2.5" width="26" height="18" fill="#dcdcdc" stroke="#8a8a8a" stroke-width="1"/>
<path d="M1 1.5 Q3 0.5 5 1.5 V20.5 Q3 21.5 1 20.5 Z" fill="#efefef" stroke="#8a8a8a" stroke-width="0.8"/>
<path d="M12 6 Q18 5 24 8 Q22 14 26 16 M8 15 Q14 17 20 14" stroke="#c3c3c3" stroke-width="2" fill="none"/>
<circle cx="14.5" cy="11" r="5.5" fill="#f0e27a"/>
<path d="M14.5 11 V5.5 A5.5 5.5 0 0 1 20 11 Z" fill="#4a78c8"/>
<path d="M14.5 11 H20 A5.5 5.5 0 0 1 14.5 16.5 Z" fill="#d83a3a"/>
</svg>
<svg class="a" style="left:177px;top:338px" width="30" height="30" viewBox="0 0 30 30">
<defs><radialGradient id="gm" cx="0.4" cy="0.3" r="0.8"><stop offset="0" stop-color="#7aa4de"/><stop offset="1" stop-color="#4f80c4"/></radialGradient></defs>
<circle cx="15" cy="15" r="14.3" fill="url(#gm)" stroke="#3f6fb0" stroke-width="0.8"/>
<circle cx="17.5" cy="8" r="2.3" fill="#fff"/>
<path d="M11 13 H16.5 L13.5 22 Q13 24 15.5 22.5 L16 23.5 Q12 26.5 10 25 Q9 24 10 21 L12 15 H10.5 Z" fill="#fff"/>
</svg>
<div class="t" style="left:214px;top:74px;color:#31363b;letter-spacing:0px">General</div>
<div class="t" style="left:214px;top:108px;color:#fff;letter-spacing:0px">Style</div>
<div class="t" style="left:214px;top:142px;color:#31363b;letter-spacing:0px">Labels</div>
<div class="t" style="left:214px;top:176px;color:#31363b;letter-spacing:0px">Fields</div>
<div class="t" style="left:214px;top:210px;color:#31363b;letter-spacing:0.05px">Display</div>
<div class="t" style="left:214px;top:244px;color:#31363b;letter-spacing:0.05px">Actions</div>
<div class="t" style="left:214px;top:278px;color:#31363b;letter-spacing:0px">Joins</div>
<div class="t" style="left:214px;top:312px;color:#31363b;letter-spacing:-0.2px">Diagrams</div>
<div class="t" style="left:214px;top:346px;color:#31363b;letter-spacing:0.15px">Metadata</div>
<div class="a" style="left:323px;top:452px;width:4px;height:1px;background:#bcbcbc"></div><div class="a" style="left:323px;top:455px;width:4px;height:1px;background:#bcbcbc"></div><div class="a" style="left:323px;top:458px;width:4px;height:1px;background:#bcbcbc"></div>
<div class="t" style="left:328px;top:66px;font-weight:bold;letter-spacing:0.55px">Style</div>
<svg class="a" style="left:330px;top:100px" width="12" height="8"><path d="M0 0H12L6 7.5Z" fill="#3a3a3a"/></svg>
<div class="t" style="left:350px;top:94px;letter-spacing:0.04px">Layer rendering</div>
<div class="t" style="left:345px;top:123px;letter-spacing:0.05px">Layer transparency</div>
<div class="t" style="left:345px;top:160px;letter-spacing:0.09px">Layer blending mode</div>
<div class="a" style="left:546px;top:128px;width:491px;height:5px;border-radius:3px;background:#c8c8c8;border:1px solid #b4b4b4"></div>
<div class="a" style="left:540px;top:123px;width:13px;height:13px;border-radius:50%;background:radial-gradient(circle at 50% 35%,#ffffff,#e6e6e6);border:1px solid #8f8f8f"></div>
<div class="spin" style="left:1046px;top:116px;width:58px;height:29px"></div><div class="a" style="left:1089px;top:117px;width:1px;height:27px;background:#d0d0d0"></div><div class="a" style="left:1090px;top:117px;width:13px;height:27px;background:linear-gradient(#f6f6f6,#e9e9e9);border-radius:0 2px 2px 0"></div><svg class="a" style="left:1092.5px;top:120px" width="8" height="21" viewBox="0 0 8 21"><path d="M1.5 6L4 1.5L6.5 6Z" fill="#555"/><path d="M1.5 15L4 19.5L6.5 15Z" fill="#777"/></svg><div class="t" style="left:1051px;top:123px">0</div>
<div class="cmb" style="left:538px;top:153px;width:183px;height:29px"></div><div class="t" style="left:543px;top:160px;letter-spacing:0.2px">Normal</div><svg class="ud" style="left:710px;top:160px" viewBox="0 0 7 18"><path d="M0.9 7.6L3.5 2.6L6.1 7.6Z M0.9 11.8L3.5 16.8L6.1 11.8Z" fill="#858585" stroke="#5a5a5a" stroke-width="0.7" stroke-linejoin="round"/></svg>
<div class="t" style="left:728px;top:160px;letter-spacing:0.15px">Feature blending mode</div>
<div class="cmb" style="left:921px;top:153px;width:183px;height:29px"></div><div class="t" style="left:926px;top:160px;letter-spacing:0.2px">Normal</div><svg class="ud" style="left:1093px;top:160px" viewBox="0 0 7 18"><path d="M0.9 7.6L3.5 2.6L6.1 7.6Z M0.9 11.8L3.5 16.8L6.1 11.8Z" fill="#858585" stroke="#5a5a5a" stroke-width="0.7" stroke-linejoin="round"/></svg>
<div class="cmb" style="left:329px;top:202px;width:152px;height:28px"></div><svg class="a" style="left:337px;top:207px" width="12" height="17" viewBox="0 0 12 17"><g fill="#16b04a" stroke="#0a6a2a" stroke-width="0.6"><rect x="1.3" y="0.9" width="6" height="3" rx="0.6"/><rect x="5.3" y="4.7" width="6" height="3" rx="0.6"/><rect x="1.3" y="8.5" width="6" height="3" rx="0.6"/><rect x="5.3" y="12.3" width="6" height="3" rx="0.6"/></g></svg><div class="t" style="left:354px;top:209px;letter-spacing:0.2px">Single Symbol</div><svg class="ud" style="left:470px;top:209px" viewBox="0 0 7 18"><path d="M0.9 7.6L3.5 2.6L6.1 7.6Z M0.9 11.8L3.5 16.8L6.1 11.8Z" fill="#858585" stroke="#5a5a5a" stroke-width="0.7" stroke-linejoin="round"/></svg>
<div class="frame" style="left:328px;top:237px;width:256px;height:102px"></div>
<div class="a" style="left:426px;top:258px;width:61px;height:61px;background:#ecee86;border:1.5px solid #000"></div>
<div class="t" style="left:328px;top:348px;letter-spacing:0.15px">Symbol layers</div>
<div class="a" style="left:328px;top:372px;width:256px;height:443px;background:#fafafa;border:1px solid #c2c2c2"></div>
<svg class="a" style="left:338px;top:386px" width="8" height="7"><path d="M0 0H8L4 7Z" fill="#3a3a3a"/></svg>
<div class="a" style="left:352px;top:381px;width:16px;height:16px;background:#ecee86;border:1px solid #555"></div>
<div class="t" style="left:374px;top:382px;font-weight:bold;letter-spacing:0.2px">Fill</div>
<div class="a sel" style="left:329px;top:405px;width:254px;height:31px"></div>
<div class="a" style="left:372px;top:413px;width:15px;height:15px;background:#b9c99a;border:1px solid #4a5a6a"></div>
<div class="t" style="left:394px;top:414px;color:#fff;letter-spacing:0.2px">Simple fill</div>
<div class="btn" style="left:329px;top:822px;width:44px;height:25px;line-height:23px;background:linear-gradient(#f0f0f0,#e2e2e2);border-color:#c4c4c4"></div>
<div class="btn" style="left:381px;top:822px;width:45px;height:25px;line-height:23px;background:linear-gradient(#f0f0f0,#e2e2e2);border-color:#c4c4c4"></div>
<div class="btn" style="left:434px;top:822px;width:44px;height:25px;line-height:23px;border-color:#8a8a8a"></div>
<div class="btn" style="left:486px;top:822px;width:45px;height:25px;line-height:23px;background:linear-gradient(#f0f0f0,#e2e2e2);border-color:#c4c4c4"></div>
<div class="btn" style="left:539px;top:822px;width:44px;height:25px;line-height:23px;background:linear-gradient(#f0f0f0,#e2e2e2);border-color:#c4c4c4"></div>
<svg class="a" style="left:343px;top:826px" width="16" height="16" viewBox="0 0 16 16"><path d="M5.5 1.5h5v4h4v5h-4v4h-5v-4h-4v-5h4z" fill="#fafafa" stroke="#b5b5b5" stroke-width="1.2" stroke-linejoin="round"/><path d="M6.8 3.5h2.4v3.3h3.3v2.4h-3.3v3.3h-2.4v-3.3h-3.3v-2.4h3.3z" fill="#8a8a8a"/></svg>
<svg class="a" style="left:395px;top:829px" width="16" height="10" viewBox="0 0 16 10"><rect x="0.8" y="1" width="14.4" height="8" rx="2" fill="#fafafa" stroke="#b5b5b5"/><rect x="2.8" y="3" width="10.4" height="4" fill="#8a8a8a"/></svg>
<svg class="a" style="left:448px;top:825px" width="16" height="19" viewBox="0 0 16 19"><path d="M8 9V5.5a3.5 3.5 0 0 1 7 0V8" fill="none" stroke="#b3b3b3" stroke-width="1.6"/><rect x="1" y="9" width="13" height="9" rx="1.5" fill="#eaa033"/></svg>
<svg class="a" style="left:499px;top:828px" width="19" height="12" viewBox="0 0 19 12"><path d="M1 10.5L9.5 1.5L18 10.5Z" fill="#9b9b9b" stroke="#cfcfcf"/></svg>
<svg class="a" style="left:552px;top:828px" width="19" height="12" viewBox="0 0 19 12"><path d="M1 1.5L9.5 10.5L18 1.5Z" fill="#9b9b9b" stroke="#cfcfcf"/></svg>
<div class="frame" style="left:590px;top:237px;width:524px;height:611px"></div>
<div class="t" style="left:601px;top:256px;letter-spacing:0.29px">Symbol layer type</div>
<div class="cmb" style="left:853px;top:249px;width:249px;height:29px"></div><div class="t" style="left:858px;top:256px;letter-spacing:0.2px">Simple fill</div><svg class="ud" style="left:1091px;top:256px" viewBox="0 0 7 18"><path d="M0.9 7.6L3.5 2.6L6.1 7.6Z M0.9 11.8L3.5 16.8L6.1 11.8Z" fill="#858585" stroke="#5a5a5a" stroke-width="0.7" stroke-linejoin="round"/></svg>
<div class="t" style="left:602px;top:289px;letter-spacing:0.26px">Colors</div>
<div class="t" style="left:715px;top:289px;letter-spacing:0.2px">Fill</div>
<div class="btn" style="left:737px;top:283px;width:100px;height:27px"></div><div class="a" style="left:740px;top:286px;width:94px;height:21px;background:#ecf086;border-radius:2px"></div>
<div class="t" style="left:837px;top:289px;letter-spacing:0.1px">Border</div>
<div class="btn" style="left:882px;top:283px;width:100px;height:27px"></div><div class="a" style="left:885px;top:286px;width:94px;height:21px;background:#000;border-radius:2px"></div>
<div class="t" style="left:602px;top:324px;letter-spacing:0.45px">Fill style</div>
<div class="cmb" style="left:716px;top:317px;width:385px;height:29px"></div><div class="a" style="left:722px;top:323px;width:32px;height:16px;background:#676767"></div><div class="t" style="left:757px;top:324px;letter-spacing:0.1px">Solid</div><svg class="ud" style="left:1090px;top:324px" viewBox="0 0 7 18"><path d="M0.9 7.6L3.5 2.6L6.1 7.6Z M0.9 11.8L3.5 16.8L6.1 11.8Z" fill="#858585" stroke="#5a5a5a" stroke-width="0.7" stroke-linejoin="round"/></svg>
<div class="t" style="left:602px;top:361px;letter-spacing:0.25px">Border style</div>
<div class="cmb" style="left:716px;top:354px;width:385px;height:29px"></div><div class="a" style="left:722px;top:367px;width:32px;height:2px;background:#000"></div><div class="t" style="left:757px;top:361px;letter-spacing:-0.1px">Solid Line</div><svg class="ud" style="left:1090px;top:361px" viewBox="0 0 7 18"><path d="M0.9 7.6L3.5 2.6L6.1 7.6Z M0.9 11.8L3.5 16.8L6.1 11.8Z" fill="#858585" stroke="#5a5a5a" stroke-width="0.7" stroke-linejoin="round"/></svg>
<div class="t" style="left:602px;top:398px;letter-spacing:0.4px">Border width</div>
<div class="spin" style="left:716px;top:391px;width:290px;height:29px"></div><div class="a" style="left:991px;top:392px;width:1px;height:27px;background:#d0d0d0"></div><div class="a" style="left:992px;top:392px;width:13px;height:27px;background:linear-gradient(#f6f6f6,#e9e9e9);border-radius:0 2px 2px 0"></div><svg class="a" style="left:994.5px;top:395px" width="8" height="21" viewBox="0 0 8 21"><path d="M1.5 6L4 1.5L6.5 6Z" fill="#555"/><path d="M1.5 15L4 19.5L6.5 15Z" fill="#777"/></svg><div class="t" style="left:721px;top:398px;letter-spacing:1.3px">0,26000</div>
<div class="cmb" style="left:1008px;top:391px;width:93px;height:29px"></div><div class="t" style="left:1013px;top:398px;letter-spacing:0.43px">Millimeter</div><svg class="ud" style="left:1090px;top:398px" viewBox="0 0 7 18"><path d="M0.9 7.6L3.5 2.6L6.1 7.6Z M0.9 11.8L3.5 16.8L6.1 11.8Z" fill="#858585" stroke="#5a5a5a" stroke-width="0.7" stroke-linejoin="round"/></svg>
<div class="t" style="left:602px;top:435px;letter-spacing:0.29px">Offset X,Y</div>
<div class="spin" style="left:716px;top:428px;width:144px;height:29px"></div><div class="a" style="left:845px;top:429px;width:1px;height:27px;background:#d0d0d0"></div><div class="a" style="left:846px;top:429px;width:13px;height:27px;background:linear-gradient(#f6f6f6,#e9e9e9);border-radius:0 2px 2px 0"></div><svg class="a" style="left:848.5px;top:432px" width="8" height="21" viewBox="0 0 8 21"><path d="M1.5 6L4 1.5L6.5 6Z" fill="#555"/><path d="M1.5 15L4 19.5L6.5 15Z" fill="#777"/></svg><div class="t" style="left:721px;top:435px;letter-spacing:1.3px">0,00000</div>
<div class="spin" style="left:862px;top:428px;width:144px;height:29px"></div><div class="a" style="left:991px;top:429px;width:1px;height:27px;background:#d0d0d0"></div><div class="a" style="left:992px;top:429px;width:13px;height:27px;background:linear-gradient(#f6f6f6,#e9e9e9);border-radius:0 2px 2px 0"></div><svg class="a" style="left:994.5px;top:432px" width="8" height="21" viewBox="0 0 8 21"><path d="M1.5 6L4 1.5L6.5 6Z" fill="#555"/><path d="M1.5 15L4 19.5L6.5 15Z" fill="#777"/></svg><div class="t" style="left:867px;top:435px;letter-spacing:1.3px">0,00000</div>
<div class="cmb" style="left:1008px;top:428px;width:93px;height:29px"></div><div class="t" style="left:1013px;top:435px;letter-spacing:0.43px">Millimeter</div><svg class="ud" style="left:1090px;top:435px" viewBox="0 0 7 18"><path d="M0.9 7.6L3.5 2.6L6.1 7.6Z M0.9 11.8L3.5 16.8L6.1 11.8Z" fill="#858585" stroke="#5a5a5a" stroke-width="0.7" stroke-linejoin="round"/></svg>
<div class="btn" style="left:602px;top:465px;width:499px;height:27px;line-height:25px;letter-spacing:0.15px">Data defined properties...</div>
<div class="btn" style="left:173px;top:855px;width:229px;height:27px;line-height:25px;letter-spacing:0.35px">Restore Default Style</div>
<div class="btn" style="left:410px;top:855px;width:229px;height:27px;line-height:25px;letter-spacing:0.13px">Save As Default</div>
<div class="btn" style="left:647px;top:855px;width:229px;height:27px;line-height:25px;text-indent:-20px;letter-spacing:0.15px">Load Style ...</div>
<svg class="a" style="left:861px;top:865px" width="9" height="8"><path d="M0.5 0.5H8.5L4.5 7.5Z" fill="#666"/></svg>
<div class="btn" style="left:884px;top:855px;width:229px;height:27px;line-height:25px;background:linear-gradient(#d6e2f2,#b8cbe8);border-color:#6f8fb8;text-indent:-19px;letter-spacing:0.09px;padding-top:3px">Save Style</div>
<svg class="a" style="left:1099px;top:865px" width="9" height="8"><path d="M0.5 0.5H8.5L4.5 7.5Z" fill="#555"/></svg>
<div class="btn" style="left:173px;top:890px;width:83px;height:27px;line-height:25px;letter-spacing:0.4px">Help</div>
<div class="btn" style="left:848px;top:890px;width:265px;height:27px;line-height:25px;"><span style="position:absolute;left:22px">Apply</span></div>
<div class="a" style="left:883px;top:883px;width:218px;height:81px;background:#fff;border:1px solid #c0c0c0;box-shadow:1px 2px 3px rgba(0,0,0,.3)"></div>
<div class="a sel" style="left:884px;top:937px;width:216px;height:26px"></div>
<div class="t" style="left:909px;top:890px;letter-spacing:0.07px">QGIS Layer Style File</div>
<div class="t" style="left:909px;top:916px;letter-spacing:-0.2px">SLD File</div>
<div class="t" style="left:909px;top:944px;color:#fff;letter-spacing:0.05px">Save in database (postgres)</div>
<svg class="a" style="left:809px;top:988px" width="18" height="18" viewBox="0 0 18 18"><rect x="0.7" y="0.7" width="16.6" height="16.6" rx="2.5" fill="#b9b9b9" stroke="#4a4a4a" stroke-width="1"/><ellipse cx="6" cy="7" rx="3.2" ry="5" transform="rotate(-25 6 7)" fill="none" stroke="#111" stroke-width="1.6"/><path d="M5.5 4.5 L7 9" stroke="#111" stroke-width="1"/><ellipse cx="10" cy="12.5" rx="4" ry="4" fill="#e0e0e0" stroke="#111" stroke-width="1.3"/><circle cx="10.5" cy="12.5" r="1.3" fill="#111"/><path d="M11 5l1.2-1M13 3.5l1.5-1.5" stroke="#111" stroke-width="1"/></svg>
<div class="t" style="left:837px;top:989px;letter-spacing:0.13px">Coordinate:</div>
<div class="a" style="left:922px;top:988px;width:298px;height:18px;border:1px solid #7c7c7c;border-radius:3px;background:#a8a8a8"></div>
<div class="t" style="left:1025px;top:989px;letter-spacing:1.05px;color:#222">16.37,-26.27</div>
<div class="t" style="left:1230px;top:989px;letter-spacing:0.3px">Scale</div>
<div class="a" style="left:1279px;top:988px;width:98px;height:18px;border:1px solid #7c7c7c;border-radius:3px;background:#a8a8a8"></div>
<div class="a" style="left:1353px;top:989px;width:1px;height:16px;background:#8c8c8c"></div>
<svg class="a" style="left:1362px;top:993px" width="9" height="8"><path d="M0.5 0.5H8.5L4.5 7.5Z" fill="#444"/></svg>
<div class="t" style="left:1281px;top:989px;letter-spacing:1.4px;color:#222">2942755</div>
<svg class="a" style="left:1385px;top:988px" width="18" height="18" viewBox="0 0 18 18"><defs><linearGradient id="gsb" x1="0" y1="0" x2="0" y2="1"><stop offset="0" stop-color="#c6c6c6"/><stop offset="1" stop-color="#b0b0b0"/></linearGradient></defs><rect x="0.7" y="0.7" width="16.6" height="16.6" rx="2.5" fill="url(#gsb)" stroke="#5e5e5e" stroke-width="1"/><path d="M1.5 16.5 L16.5 1.5" stroke="#7a7a7a" stroke-width="2.2"/><path d="M1.5 16.5 L7 11" stroke="#555" stroke-width="2.8"/><circle cx="6.3" cy="6.3" r="4.2" fill="none" stroke="#c8242a" stroke-width="1.3"/><path d="M3.5 3.5L9 9" stroke="#c8242a" stroke-width="1.3"/></svg>
<div class="a" style="left:1413px;top:990px;width:13px;height:13px;border:1px solid #5a5a5a;border-radius:2px;background:linear-gradient(#a2a2a2,#b4b4b4)"></div>
<svg class="a" style="left:1414px;top:988px" width="15" height="15"><path d="M2 8.5L5.3 11.8L13.5 3" fill="none" stroke="#222" stroke-width="2.2"/></svg>
<div class="t" style="left:1434px;top:989px;letter-spacing:0.2px">Render</div>
<div class="t" style="left:1496px;top:989px;color:#7a7a7a;letter-spacing:0.3px">EPSG:4326</div>
<svg class="a" style="left:1583px;top:988px" width="18" height="18" viewBox="0 0 18 18"><rect x="0.5" y="0.5" width="17" height="17" rx="3" fill="#9a9a9a" stroke="#777"/><circle cx="9" cy="9" r="6" fill="none" stroke="#555" stroke-width="1.4"/><path d="M9 2V16M2 9H16" stroke="#555" stroke-width="1.2"/></svg>
</body></html>
